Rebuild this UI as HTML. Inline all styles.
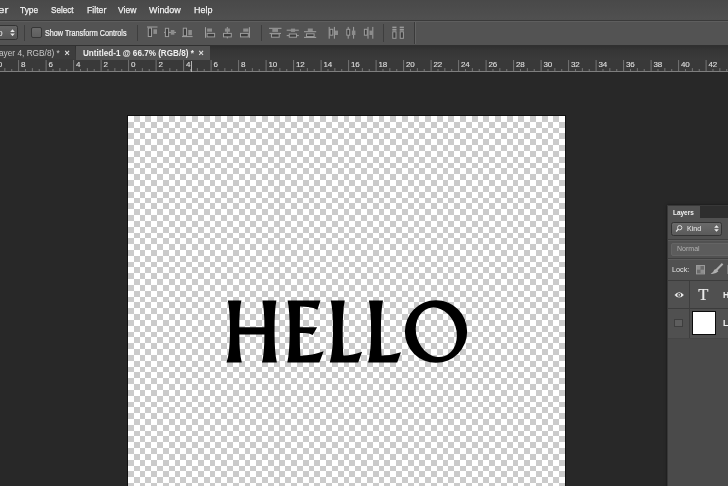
<!DOCTYPE html>
<html><head><meta charset="utf-8">
<style>
*{box-sizing:border-box;margin:0;padding:0}
html,body{width:728px;height:486px;overflow:hidden;background:#282828;font-family:"Liberation Sans",sans-serif;}
#app{position:absolute;left:-20px;top:-20px;width:768px;height:526px;overflow:hidden;background:#282828;filter:blur(0.4px)}
#in{position:absolute;left:20px;top:20px;width:728px;height:486px}
.abs{position:absolute}
#menubar{left:-20px;top:-20px;width:768px;height:40px;background:linear-gradient(#494949 50%,#505050)}
#menuline{left:-20px;top:20px;width:768px;height:1px;background:#3a3a3a}
#optbar{left:-20px;top:21px;width:768px;height:24px;background:#535353;border-top:1px solid #5e5e5e}
#optline{left:-20px;top:45px;width:768px;height:1px;background:#303030}
#tabbar{left:-20px;top:46px;width:768px;height:14px;background:linear-gradient(#2f2f2f,#363636 30%,#3b3b3b)}
#tab1{left:-20px;top:46px;width:95px;height:13px;background:#3d3d3d}
#tab2{left:76px;top:46px;width:133.5px;height:14px;background:#535353}
#rulerbg{left:-20px;top:59.5px;width:768px;height:12px;background:#393939}
.ruler{position:absolute;left:0;top:58px}
.mi{position:absolute;top:4px;font-size:9.8px;color:#f2f2f2;-webkit-text-stroke:0.25px #f2f2f2;white-space:nowrap;line-height:12px}
.t{position:absolute;white-space:nowrap;color:#e0e0e0}
</style></head><body><div id="app"><div id="in">

<!-- top chrome -->
<div id="menubar" class="abs"></div>
<div id="menuline" class="abs"></div>
<div id="optbar" class="abs"></div>
<div id="optline" class="abs"></div>
<div id="tabbar" class="abs"></div>
<div id="tab1" class="abs"></div>
<div id="tab2" class="abs"></div>
<div id="rulerbg" class="abs"></div>

<span class="mi" id="m0" style="transform-origin:0 0;transform:scaleX(1.1814);left:-2.5px;">er</span>
<span class="mi" id="m1" style="transform-origin:0 0;transform:scaleX(0.8565);left:20.0px;">Type</span>
<span class="mi" id="m2" style="transform-origin:0 0;transform:scaleX(0.8298);left:51.2px;">Select</span>
<span class="mi" id="m3" style="transform-origin:0 0;transform:scaleX(0.8861);left:87.0px;">Filter</span>
<span class="mi" id="m4" style="transform-origin:0 0;transform:scaleX(0.8688);left:118.0px;">View</span>
<span class="mi" id="m5" style="transform-origin:0 0;transform:scaleX(0.9094);left:149.3px;">Window</span>
<span class="mi" id="m6" style="transform-origin:0 0;transform:scaleX(0.9178);left:194.0px;">Help</span>

<!-- options bar -->
<div class="abs" id="dd" style="left:-6px;top:25px;width:24px;height:15px;border:1px solid #333;border-radius:2.5px;background:linear-gradient(#656565,#565656)"></div>
<span class="t" id="ddp" style="left:-2.6px;top:27.2px;font-size:9.4px;line-height:11px;color:#e4e4e4">o</span>
<svg class="abs" style="left:9.8px;top:28.8px" width="5" height="7.4" viewBox="0 0 5 7.4"><path d="M0.2 2.9L2.5 0.2L4.8 2.9z M0.2 4.5L2.5 7.2L4.8 4.5z" fill="#e6e6e6"/></svg>
<div class="abs" style="left:24px;top:25px;width:1px;height:16px;background:#3e3e3e"></div>
<div class="abs" id="cb" style="left:31.2px;top:27.3px;width:10.7px;height:10.6px;border:1.2px solid #363636;border-radius:2px;background:linear-gradient(#6a6a6a,#5e5e5e)"></div>
<span class="t" id="stc" style="transform-origin:0 0;transform:scaleX(0.8416);left:45.4px;top:27px;font-size:8.6px;line-height:12px;color:#f4f4f4;-webkit-text-stroke:0.2px #f4f4f4">Show Transform Controls</span>
<div class="abs" style="left:137px;top:25px;width:1px;height:16px;background:#3e3e3e"></div>
<div class="abs" style="left:260.5px;top:25px;width:1px;height:16px;background:#3e3e3e"></div>
<div class="abs" style="left:383px;top:24px;width:1px;height:18px;background:#3e3e3e"></div>
<div class="abs" style="left:413.5px;top:22px;width:1px;height:22px;background:#3a3a3a"></div>
<div class="abs" style="left:414.5px;top:22px;width:1px;height:22px;background:#626262"></div>

<svg class="abs" id="icons" style="left:0;top:21px" width="728" height="24" viewBox="0 21 728 24" fill="none" stroke="#a8a8a8" stroke-width="1">
<path d="M147 27L157.5 27" stroke="#a0a0a0"/>
<rect x="148.3" y="28" width="3.2" height="8.5" fill="#3c3c3c" stroke="#9c9c9c" stroke-width="1"/>
<rect x="153.4" y="29.3" width="3.6" height="4.6" fill="#8c8c8c" stroke="none"/>
<path d="M164 32.4L176 32.4" stroke="#a0a0a0"/>
<rect x="165.4" y="28.3" width="3.2" height="8.3" fill="#3c3c3c" stroke="#9c9c9c" stroke-width="1"/>
<rect x="170.8" y="30" width="3.6" height="4.7" fill="#8c8c8c" stroke="none"/>
<path d="M182 36.6L192.6 36.6" stroke="#a0a0a0"/>
<rect x="183.3" y="28.2" width="3.2" height="7.6" fill="#3c3c3c" stroke="#9c9c9c" stroke-width="1"/>
<rect x="188.3" y="30" width="3.6" height="5.2" fill="#8c8c8c" stroke="none"/>
<path d="M205.5 27.2L205.5 37.8" stroke="#a0a0a0"/>
<rect x="207.1" y="28.5" width="4.9" height="3.2" fill="#8c8c8c" stroke="none"/>
<rect x="207.1" y="33.4" width="7.5" height="3.5" fill="#3c3c3c" stroke="#9c9c9c"/>
<path d="M227.3 27L227.3 38.4" stroke="#a0a0a0"/>
<rect x="224.9" y="28.5" width="5" height="3.2" fill="#8c8c8c" stroke="none"/>
<rect x="223.5" y="33.4" width="7.8" height="3.5" fill="#3c3c3c" stroke="#9c9c9c"/>
<path d="M249.4 27.2L249.4 37.8" stroke="#a0a0a0"/>
<rect x="243.2" y="28.5" width="5.2" height="3.2" fill="#8c8c8c" stroke="none"/>
<rect x="240.5" y="33.4" width="7.8" height="3.5" fill="#3c3c3c" stroke="#9c9c9c"/>
<path d="M269 28.3L281.5 28.3" stroke="#a0a0a0"/>
<rect x="272.3" y="28.8" width="5.7" height="3.1" fill="#8c8c8c" stroke="none"/>
<path d="M269.5 33.4L281 33.4" stroke="#a0a0a0"/>
<rect x="271.5" y="33.9" width="7.7" height="3.3" fill="#3c3c3c" stroke="#9c9c9c"/>
<path d="M286.7 30.2L298.8 30.2" stroke="#a0a0a0"/>
<rect x="290.9" y="28.6" width="4.2" height="3.3" fill="#8c8c8c" stroke="none"/>
<rect x="289.3" y="34" width="7.2" height="3.2" fill="#3c3c3c" stroke="#9c9c9c"/>
<path d="M286.7 35.6L289 35.6" stroke="#a0a0a0"/>
<path d="M296.8 35.6L298.8 35.6" stroke="#a0a0a0"/>
<rect x="307.8" y="28.5" width="5" height="2.7" fill="#8c8c8c" stroke="none"/>
<path d="M304 31.7L316.2 31.7" stroke="#a0a0a0"/>
<rect x="306.5" y="33.8" width="7.6" height="2.8" fill="#3c3c3c" stroke="#9c9c9c"/>
<path d="M304 37.4L316.2 37.4" stroke="#a0a0a0"/>
<path d="M329.2 26.9L329.2 38.7" stroke="#a0a0a0"/>
<rect x="330" y="29.3" width="2.8" height="5.9" fill="#3c3c3c" stroke="#9c9c9c"/>
<path d="M334.4 26.9L334.4 38.7" stroke="#a0a0a0"/>
<rect x="334.9" y="30.6" width="3.1" height="4.4" fill="#8c8c8c" stroke="none"/>
<path d="M348.2 26.9L348.2 38.7" stroke="#a0a0a0"/>
<rect x="346.8" y="29.3" width="2.9" height="5.9" fill="#3c3c3c" stroke="#9c9c9c"/>
<path d="M353.6 26.9L353.6 38.7" stroke="#a0a0a0"/>
<rect x="351.9" y="30.6" width="3.5" height="4.4" fill="#8c8c8c" stroke="none"/>
<rect x="364.4" y="29.3" width="2.8" height="5.9" fill="#3c3c3c" stroke="#9c9c9c"/>
<path d="M368 26.9L368 38.7" stroke="#a0a0a0"/>
<rect x="369.5" y="30.6" width="2.7" height="4.4" fill="#8c8c8c" stroke="none"/>
<path d="M372.8 26.9L372.8 38.7" stroke="#a0a0a0"/>
<rect x="392.3" y="26.6" width="4.2" height="1.6" fill="#9a9a9a" stroke="none"/>
<rect x="392.3" y="29.0" width="4.2" height="1.6" fill="#9a9a9a" stroke="none"/>
<rect x="392.8" y="31.8" width="3.2" height="6.5" fill="#3c3c3c" stroke="#9c9c9c"/>
<rect x="399.7" y="26.6" width="4.2" height="1.6" fill="#9a9a9a" stroke="none"/>
<rect x="399.7" y="29.0" width="4.2" height="1.6" fill="#9a9a9a" stroke="none"/>
<rect x="400.2" y="31.8" width="3.2" height="6.5" fill="#3c3c3c" stroke="#9c9c9c"/>
</svg>

<!-- tabs -->
<span class="t" id="t1" style="transform-origin:0 0;transform:scaleX(0.9420);left:-1.5px;top:47px;font-size:8.8px;line-height:12px;color:#c8c8c8">ayer 4, RGB/8) *</span>
<span class="t" id="t1x" style="left:64.5px;top:46.5px;font-size:9px;line-height:12px;color:#e0e0e0;font-weight:bold">×</span>
<span class="t" id="t2" style="transform-origin:0 0;transform:scaleX(0.9231);left:82.6px;top:47px;font-size:8.8px;line-height:12px;color:#f0f0f0;font-weight:bold">Untitled-1 @ 66.7% (RGB/8) *</span>
<span class="t" id="t2x" style="left:198.5px;top:46.5px;font-size:9px;line-height:12px;color:#e0e0e0;font-weight:bold">×</span>

<svg class="ruler" width="728" height="14" viewBox="0 58 728 14">
<g fill="#757575"><rect x="-36.90" y="60" width="1" height="11.5" /><rect x="-30.03" y="69.00" width="1" height="2.5" /><rect x="-23.15" y="68.10" width="1" height="3.4" /><rect x="-16.28" y="69.00" width="1" height="2.5" /><rect x="-9.40" y="60" width="1" height="11.5" /><rect x="-2.53" y="69.00" width="1" height="2.5" /><rect x="4.35" y="68.10" width="1" height="3.4" /><rect x="11.22" y="69.00" width="1" height="2.5" /><rect x="18.10" y="60" width="1" height="11.5" /><rect x="24.97" y="69.00" width="1" height="2.5" /><rect x="31.85" y="68.10" width="1" height="3.4" /><rect x="38.72" y="69.00" width="1" height="2.5" /><rect x="45.60" y="60" width="1" height="11.5" /><rect x="52.47" y="69.00" width="1" height="2.5" /><rect x="59.35" y="68.10" width="1" height="3.4" /><rect x="66.22" y="69.00" width="1" height="2.5" /><rect x="73.10" y="60" width="1" height="11.5" /><rect x="79.97" y="69.00" width="1" height="2.5" /><rect x="86.85" y="68.10" width="1" height="3.4" /><rect x="93.72" y="69.00" width="1" height="2.5" /><rect x="100.60" y="60" width="1" height="11.5" /><rect x="107.47" y="69.00" width="1" height="2.5" /><rect x="114.35" y="68.10" width="1" height="3.4" /><rect x="121.22" y="69.00" width="1" height="2.5" /><rect x="128.10" y="60" width="1" height="11.5" /><rect x="134.97" y="69.00" width="1" height="2.5" /><rect x="141.85" y="68.10" width="1" height="3.4" /><rect x="148.72" y="69.00" width="1" height="2.5" /><rect x="155.60" y="60" width="1" height="11.5" /><rect x="162.47" y="69.00" width="1" height="2.5" /><rect x="169.35" y="68.10" width="1" height="3.4" /><rect x="176.22" y="69.00" width="1" height="2.5" /><rect x="183.10" y="60" width="1" height="11.5" /><rect x="189.97" y="69.00" width="1" height="2.5" /><rect x="196.85" y="68.10" width="1" height="3.4" /><rect x="203.72" y="69.00" width="1" height="2.5" /><rect x="210.60" y="60" width="1" height="11.5" /><rect x="217.47" y="69.00" width="1" height="2.5" /><rect x="224.35" y="68.10" width="1" height="3.4" /><rect x="231.22" y="69.00" width="1" height="2.5" /><rect x="238.10" y="60" width="1" height="11.5" /><rect x="244.97" y="69.00" width="1" height="2.5" /><rect x="251.85" y="68.10" width="1" height="3.4" /><rect x="258.73" y="69.00" width="1" height="2.5" /><rect x="265.60" y="60" width="1" height="11.5" /><rect x="272.48" y="69.00" width="1" height="2.5" /><rect x="279.35" y="68.10" width="1" height="3.4" /><rect x="286.23" y="69.00" width="1" height="2.5" /><rect x="293.10" y="60" width="1" height="11.5" /><rect x="299.98" y="69.00" width="1" height="2.5" /><rect x="306.85" y="68.10" width="1" height="3.4" /><rect x="313.73" y="69.00" width="1" height="2.5" /><rect x="320.60" y="60" width="1" height="11.5" /><rect x="327.48" y="69.00" width="1" height="2.5" /><rect x="334.35" y="68.10" width="1" height="3.4" /><rect x="341.23" y="69.00" width="1" height="2.5" /><rect x="348.10" y="60" width="1" height="11.5" /><rect x="354.98" y="69.00" width="1" height="2.5" /><rect x="361.85" y="68.10" width="1" height="3.4" /><rect x="368.73" y="69.00" width="1" height="2.5" /><rect x="375.60" y="60" width="1" height="11.5" /><rect x="382.48" y="69.00" width="1" height="2.5" /><rect x="389.35" y="68.10" width="1" height="3.4" /><rect x="396.23" y="69.00" width="1" height="2.5" /><rect x="403.10" y="60" width="1" height="11.5" /><rect x="409.98" y="69.00" width="1" height="2.5" /><rect x="416.85" y="68.10" width="1" height="3.4" /><rect x="423.73" y="69.00" width="1" height="2.5" /><rect x="430.60" y="60" width="1" height="11.5" /><rect x="437.48" y="69.00" width="1" height="2.5" /><rect x="444.35" y="68.10" width="1" height="3.4" /><rect x="451.23" y="69.00" width="1" height="2.5" /><rect x="458.10" y="60" width="1" height="11.5" /><rect x="464.98" y="69.00" width="1" height="2.5" /><rect x="471.85" y="68.10" width="1" height="3.4" /><rect x="478.73" y="69.00" width="1" height="2.5" /><rect x="485.60" y="60" width="1" height="11.5" /><rect x="492.48" y="69.00" width="1" height="2.5" /><rect x="499.35" y="68.10" width="1" height="3.4" /><rect x="506.23" y="69.00" width="1" height="2.5" /><rect x="513.10" y="60" width="1" height="11.5" /><rect x="519.98" y="69.00" width="1" height="2.5" /><rect x="526.85" y="68.10" width="1" height="3.4" /><rect x="533.73" y="69.00" width="1" height="2.5" /><rect x="540.60" y="60" width="1" height="11.5" /><rect x="547.48" y="69.00" width="1" height="2.5" /><rect x="554.35" y="68.10" width="1" height="3.4" /><rect x="561.23" y="69.00" width="1" height="2.5" /><rect x="568.10" y="60" width="1" height="11.5" /><rect x="574.98" y="69.00" width="1" height="2.5" /><rect x="581.85" y="68.10" width="1" height="3.4" /><rect x="588.73" y="69.00" width="1" height="2.5" /><rect x="595.60" y="60" width="1" height="11.5" /><rect x="602.48" y="69.00" width="1" height="2.5" /><rect x="609.35" y="68.10" width="1" height="3.4" /><rect x="616.23" y="69.00" width="1" height="2.5" /><rect x="623.10" y="60" width="1" height="11.5" /><rect x="629.98" y="69.00" width="1" height="2.5" /><rect x="636.85" y="68.10" width="1" height="3.4" /><rect x="643.73" y="69.00" width="1" height="2.5" /><rect x="650.60" y="60" width="1" height="11.5" /><rect x="657.48" y="69.00" width="1" height="2.5" /><rect x="664.35" y="68.10" width="1" height="3.4" /><rect x="671.23" y="69.00" width="1" height="2.5" /><rect x="678.10" y="60" width="1" height="11.5" /><rect x="684.98" y="69.00" width="1" height="2.5" /><rect x="691.85" y="68.10" width="1" height="3.4" /><rect x="698.73" y="69.00" width="1" height="2.5" /><rect x="705.60" y="60" width="1" height="11.5" /><rect x="712.48" y="69.00" width="1" height="2.5" /><rect x="719.35" y="68.10" width="1" height="3.4" /><rect x="726.23" y="69.00" width="1" height="2.5" /></g>
<g fill="#dcdcdc" font-family="Liberation Sans, sans-serif" font-size="8.0" stroke="#dcdcdc" stroke-width="0.15"><text x="-34.10" y="66.6">12</text><text x="-6.60" y="66.6">10</text><text x="20.90" y="66.6">8</text><text x="48.40" y="66.6">6</text><text x="75.90" y="66.6">4</text><text x="103.40" y="66.6">2</text><text x="130.90" y="66.6">0</text><text x="158.40" y="66.6">2</text><text x="185.90" y="66.6">4</text><text x="213.40" y="66.6">6</text><text x="240.90" y="66.6">8</text><text x="268.40" y="66.6">10</text><text x="295.90" y="66.6">12</text><text x="323.40" y="66.6">14</text><text x="350.90" y="66.6">16</text><text x="378.40" y="66.6">18</text><text x="405.90" y="66.6">20</text><text x="433.40" y="66.6">22</text><text x="460.90" y="66.6">24</text><text x="488.40" y="66.6">26</text><text x="515.90" y="66.6">28</text><text x="543.40" y="66.6">30</text><text x="570.90" y="66.6">32</text><text x="598.40" y="66.6">34</text><text x="625.90" y="66.6">36</text><text x="653.40" y="66.6">38</text><text x="680.90" y="66.6">40</text><text x="708.40" y="66.6">42</text></g>
</svg>
<div class="abs" style="left:-20px;top:71px;width:768px;height:1px;background:#7e7e7e"></div>
<div class="abs" style="left:190.8px;top:61px;width:1px;height:10.5px;background:#b4b4b4"></div>

<!-- canvas -->
<div class="abs" style="left:127.3px;top:115.3px;width:439px;height:380px;background:#111"></div>
<svg class="abs" style="left:128.3px;top:116.3px" width="437.00" height="375.70" viewBox="0 0 437.00 375.70" shape-rendering="crispEdges">
<rect width="437.00" height="375.70" fill="#fff"/>
<path fill="#cbcbcb" d="M5.83 0.00h5.83v5.83h-5.83zM17.48 0.00h5.83v5.83h-5.83zM29.13 0.00h5.83v5.83h-5.83zM40.79 0.00h5.83v5.83h-5.83zM52.44 0.00h5.83v5.83h-5.83zM64.09 0.00h5.83v5.83h-5.83zM75.75 0.00h5.83v5.83h-5.83zM87.40 0.00h5.83v5.83h-5.83zM99.05 0.00h5.83v5.83h-5.83zM110.71 0.00h5.83v5.83h-5.83zM122.36 0.00h5.83v5.83h-5.83zM134.01 0.00h5.83v5.83h-5.83zM145.67 0.00h5.83v5.83h-5.83zM157.32 0.00h5.83v5.83h-5.83zM168.97 0.00h5.83v5.83h-5.83zM180.63 0.00h5.83v5.83h-5.83zM192.28 0.00h5.83v5.83h-5.83zM203.93 0.00h5.83v5.83h-5.83zM215.59 0.00h5.83v5.83h-5.83zM227.24 0.00h5.83v5.83h-5.83zM238.89 0.00h5.83v5.83h-5.83zM250.55 0.00h5.83v5.83h-5.83zM262.20 0.00h5.83v5.83h-5.83zM273.85 0.00h5.83v5.83h-5.83zM285.51 0.00h5.83v5.83h-5.83zM297.16 0.00h5.83v5.83h-5.83zM308.82 0.00h5.83v5.83h-5.83zM320.47 0.00h5.83v5.83h-5.83zM332.12 0.00h5.83v5.83h-5.83zM343.78 0.00h5.83v5.83h-5.83zM355.43 0.00h5.83v5.83h-5.83zM367.08 0.00h5.83v5.83h-5.83zM378.74 0.00h5.83v5.83h-5.83zM390.39 0.00h5.83v5.83h-5.83zM402.04 0.00h5.83v5.83h-5.83zM413.70 0.00h5.83v5.83h-5.83zM425.35 0.00h5.83v5.83h-5.83zM0.00 5.83h5.83v5.83h-5.83zM11.65 5.83h5.83v5.83h-5.83zM23.31 5.83h5.83v5.83h-5.83zM34.96 5.83h5.83v5.83h-5.83zM46.61 5.83h5.83v5.83h-5.83zM58.27 5.83h5.83v5.83h-5.83zM69.92 5.83h5.83v5.83h-5.83zM81.57 5.83h5.83v5.83h-5.83zM93.23 5.83h5.83v5.83h-5.83zM104.88 5.83h5.83v5.83h-5.83zM116.53 5.83h5.83v5.83h-5.83zM128.19 5.83h5.83v5.83h-5.83zM139.84 5.83h5.83v5.83h-5.83zM151.49 5.83h5.83v5.83h-5.83zM163.15 5.83h5.83v5.83h-5.83zM174.80 5.83h5.83v5.83h-5.83zM186.45 5.83h5.83v5.83h-5.83zM198.11 5.83h5.83v5.83h-5.83zM209.76 5.83h5.83v5.83h-5.83zM221.41 5.83h5.83v5.83h-5.83zM233.07 5.83h5.83v5.83h-5.83zM244.72 5.83h5.83v5.83h-5.83zM256.37 5.83h5.83v5.83h-5.83zM268.03 5.83h5.83v5.83h-5.83zM279.68 5.83h5.83v5.83h-5.83zM291.33 5.83h5.83v5.83h-5.83zM302.99 5.83h5.83v5.83h-5.83zM314.64 5.83h5.83v5.83h-5.83zM326.30 5.83h5.83v5.83h-5.83zM337.95 5.83h5.83v5.83h-5.83zM349.60 5.83h5.83v5.83h-5.83zM361.26 5.83h5.83v5.83h-5.83zM372.91 5.83h5.83v5.83h-5.83zM384.56 5.83h5.83v5.83h-5.83zM396.22 5.83h5.83v5.83h-5.83zM407.87 5.83h5.83v5.83h-5.83zM419.52 5.83h5.83v5.83h-5.83zM431.18 5.83h5.82v5.83h-5.82zM5.83 11.65h5.83v5.83h-5.83zM17.48 11.65h5.83v5.83h-5.83zM29.13 11.65h5.83v5.83h-5.83zM40.79 11.65h5.83v5.83h-5.83zM52.44 11.65h5.83v5.83h-5.83zM64.09 11.65h5.83v5.83h-5.83zM75.75 11.65h5.83v5.83h-5.83zM87.40 11.65h5.83v5.83h-5.83zM99.05 11.65h5.83v5.83h-5.83zM110.71 11.65h5.83v5.83h-5.83zM122.36 11.65h5.83v5.83h-5.83zM134.01 11.65h5.83v5.83h-5.83zM145.67 11.65h5.83v5.83h-5.83zM157.32 11.65h5.83v5.83h-5.83zM168.97 11.65h5.83v5.83h-5.83zM180.63 11.65h5.83v5.83h-5.83zM192.28 11.65h5.83v5.83h-5.83zM203.93 11.65h5.83v5.83h-5.83zM215.59 11.65h5.83v5.83h-5.83zM227.24 11.65h5.83v5.83h-5.83zM238.89 11.65h5.83v5.83h-5.83zM250.55 11.65h5.83v5.83h-5.83zM262.20 11.65h5.83v5.83h-5.83zM273.85 11.65h5.83v5.83h-5.83zM285.51 11.65h5.83v5.83h-5.83zM297.16 11.65h5.83v5.83h-5.83zM308.82 11.65h5.83v5.83h-5.83zM320.47 11.65h5.83v5.83h-5.83zM332.12 11.65h5.83v5.83h-5.83zM343.78 11.65h5.83v5.83h-5.83zM355.43 11.65h5.83v5.83h-5.83zM367.08 11.65h5.83v5.83h-5.83zM378.74 11.65h5.83v5.83h-5.83zM390.39 11.65h5.83v5.83h-5.83zM402.04 11.65h5.83v5.83h-5.83zM413.70 11.65h5.83v5.83h-5.83zM425.35 11.65h5.83v5.83h-5.83zM0.00 17.48h5.83v5.83h-5.83zM11.65 17.48h5.83v5.83h-5.83zM23.31 17.48h5.83v5.83h-5.83zM34.96 17.48h5.83v5.83h-5.83zM46.61 17.48h5.83v5.83h-5.83zM58.27 17.48h5.83v5.83h-5.83zM69.92 17.48h5.83v5.83h-5.83zM81.57 17.48h5.83v5.83h-5.83zM93.23 17.48h5.83v5.83h-5.83zM104.88 17.48h5.83v5.83h-5.83zM116.53 17.48h5.83v5.83h-5.83zM128.19 17.48h5.83v5.83h-5.83zM139.84 17.48h5.83v5.83h-5.83zM151.49 17.48h5.83v5.83h-5.83zM163.15 17.48h5.83v5.83h-5.83zM174.80 17.48h5.83v5.83h-5.83zM186.45 17.48h5.83v5.83h-5.83zM198.11 17.48h5.83v5.83h-5.83zM209.76 17.48h5.83v5.83h-5.83zM221.41 17.48h5.83v5.83h-5.83zM233.07 17.48h5.83v5.83h-5.83zM244.72 17.48h5.83v5.83h-5.83zM256.37 17.48h5.83v5.83h-5.83zM268.03 17.48h5.83v5.83h-5.83zM279.68 17.48h5.83v5.83h-5.83zM291.33 17.48h5.83v5.83h-5.83zM302.99 17.48h5.83v5.83h-5.83zM314.64 17.48h5.83v5.83h-5.83zM326.30 17.48h5.83v5.83h-5.83zM337.95 17.48h5.83v5.83h-5.83zM349.60 17.48h5.83v5.83h-5.83zM361.26 17.48h5.83v5.83h-5.83zM372.91 17.48h5.83v5.83h-5.83zM384.56 17.48h5.83v5.83h-5.83zM396.22 17.48h5.83v5.83h-5.83zM407.87 17.48h5.83v5.83h-5.83zM419.52 17.48h5.83v5.83h-5.83zM431.18 17.48h5.82v5.83h-5.82zM5.83 23.31h5.83v5.83h-5.83zM17.48 23.31h5.83v5.83h-5.83zM29.13 23.31h5.83v5.83h-5.83zM40.79 23.31h5.83v5.83h-5.83zM52.44 23.31h5.83v5.83h-5.83zM64.09 23.31h5.83v5.83h-5.83zM75.75 23.31h5.83v5.83h-5.83zM87.40 23.31h5.83v5.83h-5.83zM99.05 23.31h5.83v5.83h-5.83zM110.71 23.31h5.83v5.83h-5.83zM122.36 23.31h5.83v5.83h-5.83zM134.01 23.31h5.83v5.83h-5.83zM145.67 23.31h5.83v5.83h-5.83zM157.32 23.31h5.83v5.83h-5.83zM168.97 23.31h5.83v5.83h-5.83zM180.63 23.31h5.83v5.83h-5.83zM192.28 23.31h5.83v5.83h-5.83zM203.93 23.31h5.83v5.83h-5.83zM215.59 23.31h5.83v5.83h-5.83zM227.24 23.31h5.83v5.83h-5.83zM238.89 23.31h5.83v5.83h-5.83zM250.55 23.31h5.83v5.83h-5.83zM262.20 23.31h5.83v5.83h-5.83zM273.85 23.31h5.83v5.83h-5.83zM285.51 23.31h5.83v5.83h-5.83zM297.16 23.31h5.83v5.83h-5.83zM308.82 23.31h5.83v5.83h-5.83zM320.47 23.31h5.83v5.83h-5.83zM332.12 23.31h5.83v5.83h-5.83zM343.78 23.31h5.83v5.83h-5.83zM355.43 23.31h5.83v5.83h-5.83zM367.08 23.31h5.83v5.83h-5.83zM378.74 23.31h5.83v5.83h-5.83zM390.39 23.31h5.83v5.83h-5.83zM402.04 23.31h5.83v5.83h-5.83zM413.70 23.31h5.83v5.83h-5.83zM425.35 23.31h5.83v5.83h-5.83zM0.00 29.13h5.83v5.83h-5.83zM11.65 29.13h5.83v5.83h-5.83zM23.31 29.13h5.83v5.83h-5.83zM34.96 29.13h5.83v5.83h-5.83zM46.61 29.13h5.83v5.83h-5.83zM58.27 29.13h5.83v5.83h-5.83zM69.92 29.13h5.83v5.83h-5.83zM81.57 29.13h5.83v5.83h-5.83zM93.23 29.13h5.83v5.83h-5.83zM104.88 29.13h5.83v5.83h-5.83zM116.53 29.13h5.83v5.83h-5.83zM128.19 29.13h5.83v5.83h-5.83zM139.84 29.13h5.83v5.83h-5.83zM151.49 29.13h5.83v5.83h-5.83zM163.15 29.13h5.83v5.83h-5.83zM174.80 29.13h5.83v5.83h-5.83zM186.45 29.13h5.83v5.83h-5.83zM198.11 29.13h5.83v5.83h-5.83zM209.76 29.13h5.83v5.83h-5.83zM221.41 29.13h5.83v5.83h-5.83zM233.07 29.13h5.83v5.83h-5.83zM244.72 29.13h5.83v5.83h-5.83zM256.37 29.13h5.83v5.83h-5.83zM268.03 29.13h5.83v5.83h-5.83zM279.68 29.13h5.83v5.83h-5.83zM291.33 29.13h5.83v5.83h-5.83zM302.99 29.13h5.83v5.83h-5.83zM314.64 29.13h5.83v5.83h-5.83zM326.30 29.13h5.83v5.83h-5.83zM337.95 29.13h5.83v5.83h-5.83zM349.60 29.13h5.83v5.83h-5.83zM361.26 29.13h5.83v5.83h-5.83zM372.91 29.13h5.83v5.83h-5.83zM384.56 29.13h5.83v5.83h-5.83zM396.22 29.13h5.83v5.83h-5.83zM407.87 29.13h5.83v5.83h-5.83zM419.52 29.13h5.83v5.83h-5.83zM431.18 29.13h5.82v5.83h-5.82zM5.83 34.96h5.83v5.83h-5.83zM17.48 34.96h5.83v5.83h-5.83zM29.13 34.96h5.83v5.83h-5.83zM40.79 34.96h5.83v5.83h-5.83zM52.44 34.96h5.83v5.83h-5.83zM64.09 34.96h5.83v5.83h-5.83zM75.75 34.96h5.83v5.83h-5.83zM87.40 34.96h5.83v5.83h-5.83zM99.05 34.96h5.83v5.83h-5.83zM110.71 34.96h5.83v5.83h-5.83zM122.36 34.96h5.83v5.83h-5.83zM134.01 34.96h5.83v5.83h-5.83zM145.67 34.96h5.83v5.83h-5.83zM157.32 34.96h5.83v5.83h-5.83zM168.97 34.96h5.83v5.83h-5.83zM180.63 34.96h5.83v5.83h-5.83zM192.28 34.96h5.83v5.83h-5.83zM203.93 34.96h5.83v5.83h-5.83zM215.59 34.96h5.83v5.83h-5.83zM227.24 34.96h5.83v5.83h-5.83zM238.89 34.96h5.83v5.83h-5.83zM250.55 34.96h5.83v5.83h-5.83zM262.20 34.96h5.83v5.83h-5.83zM273.85 34.96h5.83v5.83h-5.83zM285.51 34.96h5.83v5.83h-5.83zM297.16 34.96h5.83v5.83h-5.83zM308.82 34.96h5.83v5.83h-5.83zM320.47 34.96h5.83v5.83h-5.83zM332.12 34.96h5.83v5.83h-5.83zM343.78 34.96h5.83v5.83h-5.83zM355.43 34.96h5.83v5.83h-5.83zM367.08 34.96h5.83v5.83h-5.83zM378.74 34.96h5.83v5.83h-5.83zM390.39 34.96h5.83v5.83h-5.83zM402.04 34.96h5.83v5.83h-5.83zM413.70 34.96h5.83v5.83h-5.83zM425.35 34.96h5.83v5.83h-5.83zM0.00 40.79h5.83v5.83h-5.83zM11.65 40.79h5.83v5.83h-5.83zM23.31 40.79h5.83v5.83h-5.83zM34.96 40.79h5.83v5.83h-5.83zM46.61 40.79h5.83v5.83h-5.83zM58.27 40.79h5.83v5.83h-5.83zM69.92 40.79h5.83v5.83h-5.83zM81.57 40.79h5.83v5.83h-5.83zM93.23 40.79h5.83v5.83h-5.83zM104.88 40.79h5.83v5.83h-5.83zM116.53 40.79h5.83v5.83h-5.83zM128.19 40.79h5.83v5.83h-5.83zM139.84 40.79h5.83v5.83h-5.83zM151.49 40.79h5.83v5.83h-5.83zM163.15 40.79h5.83v5.83h-5.83zM174.80 40.79h5.83v5.83h-5.83zM186.45 40.79h5.83v5.83h-5.83zM198.11 40.79h5.83v5.83h-5.83zM209.76 40.79h5.83v5.83h-5.83zM221.41 40.79h5.83v5.83h-5.83zM233.07 40.79h5.83v5.83h-5.83zM244.72 40.79h5.83v5.83h-5.83zM256.37 40.79h5.83v5.83h-5.83zM268.03 40.79h5.83v5.83h-5.83zM279.68 40.79h5.83v5.83h-5.83zM291.33 40.79h5.83v5.83h-5.83zM302.99 40.79h5.83v5.83h-5.83zM314.64 40.79h5.83v5.83h-5.83zM326.30 40.79h5.83v5.83h-5.83zM337.95 40.79h5.83v5.83h-5.83zM349.60 40.79h5.83v5.83h-5.83zM361.26 40.79h5.83v5.83h-5.83zM372.91 40.79h5.83v5.83h-5.83zM384.56 40.79h5.83v5.83h-5.83zM396.22 40.79h5.83v5.83h-5.83zM407.87 40.79h5.83v5.83h-5.83zM419.52 40.79h5.83v5.83h-5.83zM431.18 40.79h5.82v5.83h-5.82zM5.83 46.61h5.83v5.83h-5.83zM17.48 46.61h5.83v5.83h-5.83zM29.13 46.61h5.83v5.83h-5.83zM40.79 46.61h5.83v5.83h-5.83zM52.44 46.61h5.83v5.83h-5.83zM64.09 46.61h5.83v5.83h-5.83zM75.75 46.61h5.83v5.83h-5.83zM87.40 46.61h5.83v5.83h-5.83zM99.05 46.61h5.83v5.83h-5.83zM110.71 46.61h5.83v5.83h-5.83zM122.36 46.61h5.83v5.83h-5.83zM134.01 46.61h5.83v5.83h-5.83zM145.67 46.61h5.83v5.83h-5.83zM157.32 46.61h5.83v5.83h-5.83zM168.97 46.61h5.83v5.83h-5.83zM180.63 46.61h5.83v5.83h-5.83zM192.28 46.61h5.83v5.83h-5.83zM203.93 46.61h5.83v5.83h-5.83zM215.59 46.61h5.83v5.83h-5.83zM227.24 46.61h5.83v5.83h-5.83zM238.89 46.61h5.83v5.83h-5.83zM250.55 46.61h5.83v5.83h-5.83zM262.20 46.61h5.83v5.83h-5.83zM273.85 46.61h5.83v5.83h-5.83zM285.51 46.61h5.83v5.83h-5.83zM297.16 46.61h5.83v5.83h-5.83zM308.82 46.61h5.83v5.83h-5.83zM320.47 46.61h5.83v5.83h-5.83zM332.12 46.61h5.83v5.83h-5.83zM343.78 46.61h5.83v5.83h-5.83zM355.43 46.61h5.83v5.83h-5.83zM367.08 46.61h5.83v5.83h-5.83zM378.74 46.61h5.83v5.83h-5.83zM390.39 46.61h5.83v5.83h-5.83zM402.04 46.61h5.83v5.83h-5.83zM413.70 46.61h5.83v5.83h-5.83zM425.35 46.61h5.83v5.83h-5.83zM0.00 52.44h5.83v5.83h-5.83zM11.65 52.44h5.83v5.83h-5.83zM23.31 52.44h5.83v5.83h-5.83zM34.96 52.44h5.83v5.83h-5.83zM46.61 52.44h5.83v5.83h-5.83zM58.27 52.44h5.83v5.83h-5.83zM69.92 52.44h5.83v5.83h-5.83zM81.57 52.44h5.83v5.83h-5.83zM93.23 52.44h5.83v5.83h-5.83zM104.88 52.44h5.83v5.83h-5.83zM116.53 52.44h5.83v5.83h-5.83zM128.19 52.44h5.83v5.83h-5.83zM139.84 52.44h5.83v5.83h-5.83zM151.49 52.44h5.83v5.83h-5.83zM163.15 52.44h5.83v5.83h-5.83zM174.80 52.44h5.83v5.83h-5.83zM186.45 52.44h5.83v5.83h-5.83zM198.11 52.44h5.83v5.83h-5.83zM209.76 52.44h5.83v5.83h-5.83zM221.41 52.44h5.83v5.83h-5.83zM233.07 52.44h5.83v5.83h-5.83zM244.72 52.44h5.83v5.83h-5.83zM256.37 52.44h5.83v5.83h-5.83zM268.03 52.44h5.83v5.83h-5.83zM279.68 52.44h5.83v5.83h-5.83zM291.33 52.44h5.83v5.83h-5.83zM302.99 52.44h5.83v5.83h-5.83zM314.64 52.44h5.83v5.83h-5.83zM326.30 52.44h5.83v5.83h-5.83zM337.95 52.44h5.83v5.83h-5.83zM349.60 52.44h5.83v5.83h-5.83zM361.26 52.44h5.83v5.83h-5.83zM372.91 52.44h5.83v5.83h-5.83zM384.56 52.44h5.83v5.83h-5.83zM396.22 52.44h5.83v5.83h-5.83zM407.87 52.44h5.83v5.83h-5.83zM419.52 52.44h5.83v5.83h-5.83zM431.18 52.44h5.82v5.83h-5.82zM5.83 58.27h5.83v5.83h-5.83zM17.48 58.27h5.83v5.83h-5.83zM29.13 58.27h5.83v5.83h-5.83zM40.79 58.27h5.83v5.83h-5.83zM52.44 58.27h5.83v5.83h-5.83zM64.09 58.27h5.83v5.83h-5.83zM75.75 58.27h5.83v5.83h-5.83zM87.40 58.27h5.83v5.83h-5.83zM99.05 58.27h5.83v5.83h-5.83zM110.71 58.27h5.83v5.83h-5.83zM122.36 58.27h5.83v5.83h-5.83zM134.01 58.27h5.83v5.83h-5.83zM145.67 58.27h5.83v5.83h-5.83zM157.32 58.27h5.83v5.83h-5.83zM168.97 58.27h5.83v5.83h-5.83zM180.63 58.27h5.83v5.83h-5.83zM192.28 58.27h5.83v5.83h-5.83zM203.93 58.27h5.83v5.83h-5.83zM215.59 58.27h5.83v5.83h-5.83zM227.24 58.27h5.83v5.83h-5.83zM238.89 58.27h5.83v5.83h-5.83zM250.55 58.27h5.83v5.83h-5.83zM262.20 58.27h5.83v5.83h-5.83zM273.85 58.27h5.83v5.83h-5.83zM285.51 58.27h5.83v5.83h-5.83zM297.16 58.27h5.83v5.83h-5.83zM308.82 58.27h5.83v5.83h-5.83zM320.47 58.27h5.83v5.83h-5.83zM332.12 58.27h5.83v5.83h-5.83zM343.78 58.27h5.83v5.83h-5.83zM355.43 58.27h5.83v5.83h-5.83zM367.08 58.27h5.83v5.83h-5.83zM378.74 58.27h5.83v5.83h-5.83zM390.39 58.27h5.83v5.83h-5.83zM402.04 58.27h5.83v5.83h-5.83zM413.70 58.27h5.83v5.83h-5.83zM425.35 58.27h5.83v5.83h-5.83zM0.00 64.09h5.83v5.83h-5.83zM11.65 64.09h5.83v5.83h-5.83zM23.31 64.09h5.83v5.83h-5.83zM34.96 64.09h5.83v5.83h-5.83zM46.61 64.09h5.83v5.83h-5.83zM58.27 64.09h5.83v5.83h-5.83zM69.92 64.09h5.83v5.83h-5.83zM81.57 64.09h5.83v5.83h-5.83zM93.23 64.09h5.83v5.83h-5.83zM104.88 64.09h5.83v5.83h-5.83zM116.53 64.09h5.83v5.83h-5.83zM128.19 64.09h5.83v5.83h-5.83zM139.84 64.09h5.83v5.83h-5.83zM151.49 64.09h5.83v5.83h-5.83zM163.15 64.09h5.83v5.83h-5.83zM174.80 64.09h5.83v5.83h-5.83zM186.45 64.09h5.83v5.83h-5.83zM198.11 64.09h5.83v5.83h-5.83zM209.76 64.09h5.83v5.83h-5.83zM221.41 64.09h5.83v5.83h-5.83zM233.07 64.09h5.83v5.83h-5.83zM244.72 64.09h5.83v5.83h-5.83zM256.37 64.09h5.83v5.83h-5.83zM268.03 64.09h5.83v5.83h-5.83zM279.68 64.09h5.83v5.83h-5.83zM291.33 64.09h5.83v5.83h-5.83zM302.99 64.09h5.83v5.83h-5.83zM314.64 64.09h5.83v5.83h-5.83zM326.30 64.09h5.83v5.83h-5.83zM337.95 64.09h5.83v5.83h-5.83zM349.60 64.09h5.83v5.83h-5.83zM361.26 64.09h5.83v5.83h-5.83zM372.91 64.09h5.83v5.83h-5.83zM384.56 64.09h5.83v5.83h-5.83zM396.22 64.09h5.83v5.83h-5.83zM407.87 64.09h5.83v5.83h-5.83zM419.52 64.09h5.83v5.83h-5.83zM431.18 64.09h5.82v5.83h-5.82zM5.83 69.92h5.83v5.83h-5.83zM17.48 69.92h5.83v5.83h-5.83zM29.13 69.92h5.83v5.83h-5.83zM40.79 69.92h5.83v5.83h-5.83zM52.44 69.92h5.83v5.83h-5.83zM64.09 69.92h5.83v5.83h-5.83zM75.75 69.92h5.83v5.83h-5.83zM87.40 69.92h5.83v5.83h-5.83zM99.05 69.92h5.83v5.83h-5.83zM110.71 69.92h5.83v5.83h-5.83zM122.36 69.92h5.83v5.83h-5.83zM134.01 69.92h5.83v5.83h-5.83zM145.67 69.92h5.83v5.83h-5.83zM157.32 69.92h5.83v5.83h-5.83zM168.97 69.92h5.83v5.83h-5.83zM180.63 69.92h5.83v5.83h-5.83zM192.28 69.92h5.83v5.83h-5.83zM203.93 69.92h5.83v5.83h-5.83zM215.59 69.92h5.83v5.83h-5.83zM227.24 69.92h5.83v5.83h-5.83zM238.89 69.92h5.83v5.83h-5.83zM250.55 69.92h5.83v5.83h-5.83zM262.20 69.92h5.83v5.83h-5.83zM273.85 69.92h5.83v5.83h-5.83zM285.51 69.92h5.83v5.83h-5.83zM297.16 69.92h5.83v5.83h-5.83zM308.82 69.92h5.83v5.83h-5.83zM320.47 69.92h5.83v5.83h-5.83zM332.12 69.92h5.83v5.83h-5.83zM343.78 69.92h5.83v5.83h-5.83zM355.43 69.92h5.83v5.83h-5.83zM367.08 69.92h5.83v5.83h-5.83zM378.74 69.92h5.83v5.83h-5.83zM390.39 69.92h5.83v5.83h-5.83zM402.04 69.92h5.83v5.83h-5.83zM413.70 69.92h5.83v5.83h-5.83zM425.35 69.92h5.83v5.83h-5.83zM0.00 75.75h5.83v5.83h-5.83zM11.65 75.75h5.83v5.83h-5.83zM23.31 75.75h5.83v5.83h-5.83zM34.96 75.75h5.83v5.83h-5.83zM46.61 75.75h5.83v5.83h-5.83zM58.27 75.75h5.83v5.83h-5.83zM69.92 75.75h5.83v5.83h-5.83zM81.57 75.75h5.83v5.83h-5.83zM93.23 75.75h5.83v5.83h-5.83zM104.88 75.75h5.83v5.83h-5.83zM116.53 75.75h5.83v5.83h-5.83zM128.19 75.75h5.83v5.83h-5.83zM139.84 75.75h5.83v5.83h-5.83zM151.49 75.75h5.83v5.83h-5.83zM163.15 75.75h5.83v5.83h-5.83zM174.80 75.75h5.83v5.83h-5.83zM186.45 75.75h5.83v5.83h-5.83zM198.11 75.75h5.83v5.83h-5.83zM209.76 75.75h5.83v5.83h-5.83zM221.41 75.75h5.83v5.83h-5.83zM233.07 75.75h5.83v5.83h-5.83zM244.72 75.75h5.83v5.83h-5.83zM256.37 75.75h5.83v5.83h-5.83zM268.03 75.75h5.83v5.83h-5.83zM279.68 75.75h5.83v5.83h-5.83zM291.33 75.75h5.83v5.83h-5.83zM302.99 75.75h5.83v5.83h-5.83zM314.64 75.75h5.83v5.83h-5.83zM326.30 75.75h5.83v5.83h-5.83zM337.95 75.75h5.83v5.83h-5.83zM349.60 75.75h5.83v5.83h-5.83zM361.26 75.75h5.83v5.83h-5.83zM372.91 75.75h5.83v5.83h-5.83zM384.56 75.75h5.83v5.83h-5.83zM396.22 75.75h5.83v5.83h-5.83zM407.87 75.75h5.83v5.83h-5.83zM419.52 75.75h5.83v5.83h-5.83zM431.18 75.75h5.82v5.83h-5.82zM5.83 81.57h5.83v5.83h-5.83zM17.48 81.57h5.83v5.83h-5.83zM29.13 81.57h5.83v5.83h-5.83zM40.79 81.57h5.83v5.83h-5.83zM52.44 81.57h5.83v5.83h-5.83zM64.09 81.57h5.83v5.83h-5.83zM75.75 81.57h5.83v5.83h-5.83zM87.40 81.57h5.83v5.83h-5.83zM99.05 81.57h5.83v5.83h-5.83zM110.71 81.57h5.83v5.83h-5.83zM122.36 81.57h5.83v5.83h-5.83zM134.01 81.57h5.83v5.83h-5.83zM145.67 81.57h5.83v5.83h-5.83zM157.32 81.57h5.83v5.83h-5.83zM168.97 81.57h5.83v5.83h-5.83zM180.63 81.57h5.83v5.83h-5.83zM192.28 81.57h5.83v5.83h-5.83zM203.93 81.57h5.83v5.83h-5.83zM215.59 81.57h5.83v5.83h-5.83zM227.24 81.57h5.83v5.83h-5.83zM238.89 81.57h5.83v5.83h-5.83zM250.55 81.57h5.83v5.83h-5.83zM262.20 81.57h5.83v5.83h-5.83zM273.85 81.57h5.83v5.83h-5.83zM285.51 81.57h5.83v5.83h-5.83zM297.16 81.57h5.83v5.83h-5.83zM308.82 81.57h5.83v5.83h-5.83zM320.47 81.57h5.83v5.83h-5.83zM332.12 81.57h5.83v5.83h-5.83zM343.78 81.57h5.83v5.83h-5.83zM355.43 81.57h5.83v5.83h-5.83zM367.08 81.57h5.83v5.83h-5.83zM378.74 81.57h5.83v5.83h-5.83zM390.39 81.57h5.83v5.83h-5.83zM402.04 81.57h5.83v5.83h-5.83zM413.70 81.57h5.83v5.83h-5.83zM425.35 81.57h5.83v5.83h-5.83zM0.00 87.40h5.83v5.83h-5.83zM11.65 87.40h5.83v5.83h-5.83zM23.31 87.40h5.83v5.83h-5.83zM34.96 87.40h5.83v5.83h-5.83zM46.61 87.40h5.83v5.83h-5.83zM58.27 87.40h5.83v5.83h-5.83zM69.92 87.40h5.83v5.83h-5.83zM81.57 87.40h5.83v5.83h-5.83zM93.23 87.40h5.83v5.83h-5.83zM104.88 87.40h5.83v5.83h-5.83zM116.53 87.40h5.83v5.83h-5.83zM128.19 87.40h5.83v5.83h-5.83zM139.84 87.40h5.83v5.83h-5.83zM151.49 87.40h5.83v5.83h-5.83zM163.15 87.40h5.83v5.83h-5.83zM174.80 87.40h5.83v5.83h-5.83zM186.45 87.40h5.83v5.83h-5.83zM198.11 87.40h5.83v5.83h-5.83zM209.76 87.40h5.83v5.83h-5.83zM221.41 87.40h5.83v5.83h-5.83zM233.07 87.40h5.83v5.83h-5.83zM244.72 87.40h5.83v5.83h-5.83zM256.37 87.40h5.83v5.83h-5.83zM268.03 87.40h5.83v5.83h-5.83zM279.68 87.40h5.83v5.83h-5.83zM291.33 87.40h5.83v5.83h-5.83zM302.99 87.40h5.83v5.83h-5.83zM314.64 87.40h5.83v5.83h-5.83zM326.30 87.40h5.83v5.83h-5.83zM337.95 87.40h5.83v5.83h-5.83zM349.60 87.40h5.83v5.83h-5.83zM361.26 87.40h5.83v5.83h-5.83zM372.91 87.40h5.83v5.83h-5.83zM384.56 87.40h5.83v5.83h-5.83zM396.22 87.40h5.83v5.83h-5.83zM407.87 87.40h5.83v5.83h-5.83zM419.52 87.40h5.83v5.83h-5.83zM431.18 87.40h5.82v5.83h-5.82zM5.83 93.23h5.83v5.83h-5.83zM17.48 93.23h5.83v5.83h-5.83zM29.13 93.23h5.83v5.83h-5.83zM40.79 93.23h5.83v5.83h-5.83zM52.44 93.23h5.83v5.83h-5.83zM64.09 93.23h5.83v5.83h-5.83zM75.75 93.23h5.83v5.83h-5.83zM87.40 93.23h5.83v5.83h-5.83zM99.05 93.23h5.83v5.83h-5.83zM110.71 93.23h5.83v5.83h-5.83zM122.36 93.23h5.83v5.83h-5.83zM134.01 93.23h5.83v5.83h-5.83zM145.67 93.23h5.83v5.83h-5.83zM157.32 93.23h5.83v5.83h-5.83zM168.97 93.23h5.83v5.83h-5.83zM180.63 93.23h5.83v5.83h-5.83zM192.28 93.23h5.83v5.83h-5.83zM203.93 93.23h5.83v5.83h-5.83zM215.59 93.23h5.83v5.83h-5.83zM227.24 93.23h5.83v5.83h-5.83zM238.89 93.23h5.83v5.83h-5.83zM250.55 93.23h5.83v5.83h-5.83zM262.20 93.23h5.83v5.83h-5.83zM273.85 93.23h5.83v5.83h-5.83zM285.51 93.23h5.83v5.83h-5.83zM297.16 93.23h5.83v5.83h-5.83zM308.82 93.23h5.83v5.83h-5.83zM320.47 93.23h5.83v5.83h-5.83zM332.12 93.23h5.83v5.83h-5.83zM343.78 93.23h5.83v5.83h-5.83zM355.43 93.23h5.83v5.83h-5.83zM367.08 93.23h5.83v5.83h-5.83zM378.74 93.23h5.83v5.83h-5.83zM390.39 93.23h5.83v5.83h-5.83zM402.04 93.23h5.83v5.83h-5.83zM413.70 93.23h5.83v5.83h-5.83zM425.35 93.23h5.83v5.83h-5.83zM0.00 99.05h5.83v5.83h-5.83zM11.65 99.05h5.83v5.83h-5.83zM23.31 99.05h5.83v5.83h-5.83zM34.96 99.05h5.83v5.83h-5.83zM46.61 99.05h5.83v5.83h-5.83zM58.27 99.05h5.83v5.83h-5.83zM69.92 99.05h5.83v5.83h-5.83zM81.57 99.05h5.83v5.83h-5.83zM93.23 99.05h5.83v5.83h-5.83zM104.88 99.05h5.83v5.83h-5.83zM116.53 99.05h5.83v5.83h-5.83zM128.19 99.05h5.83v5.83h-5.83zM139.84 99.05h5.83v5.83h-5.83zM151.49 99.05h5.83v5.83h-5.83zM163.15 99.05h5.83v5.83h-5.83zM174.80 99.05h5.83v5.83h-5.83zM186.45 99.05h5.83v5.83h-5.83zM198.11 99.05h5.83v5.83h-5.83zM209.76 99.05h5.83v5.83h-5.83zM221.41 99.05h5.83v5.83h-5.83zM233.07 99.05h5.83v5.83h-5.83zM244.72 99.05h5.83v5.83h-5.83zM256.37 99.05h5.83v5.83h-5.83zM268.03 99.05h5.83v5.83h-5.83zM279.68 99.05h5.83v5.83h-5.83zM291.33 99.05h5.83v5.83h-5.83zM302.99 99.05h5.83v5.83h-5.83zM314.64 99.05h5.83v5.83h-5.83zM326.30 99.05h5.83v5.83h-5.83zM337.95 99.05h5.83v5.83h-5.83zM349.60 99.05h5.83v5.83h-5.83zM361.26 99.05h5.83v5.83h-5.83zM372.91 99.05h5.83v5.83h-5.83zM384.56 99.05h5.83v5.83h-5.83zM396.22 99.05h5.83v5.83h-5.83zM407.87 99.05h5.83v5.83h-5.83zM419.52 99.05h5.83v5.83h-5.83zM431.18 99.05h5.82v5.83h-5.82zM5.83 104.88h5.83v5.83h-5.83zM17.48 104.88h5.83v5.83h-5.83zM29.13 104.88h5.83v5.83h-5.83zM40.79 104.88h5.83v5.83h-5.83zM52.44 104.88h5.83v5.83h-5.83zM64.09 104.88h5.83v5.83h-5.83zM75.75 104.88h5.83v5.83h-5.83zM87.40 104.88h5.83v5.83h-5.83zM99.05 104.88h5.83v5.83h-5.83zM110.71 104.88h5.83v5.83h-5.83zM122.36 104.88h5.83v5.83h-5.83zM134.01 104.88h5.83v5.83h-5.83zM145.67 104.88h5.83v5.83h-5.83zM157.32 104.88h5.83v5.83h-5.83zM168.97 104.88h5.83v5.83h-5.83zM180.63 104.88h5.83v5.83h-5.83zM192.28 104.88h5.83v5.83h-5.83zM203.93 104.88h5.83v5.83h-5.83zM215.59 104.88h5.83v5.83h-5.83zM227.24 104.88h5.83v5.83h-5.83zM238.89 104.88h5.83v5.83h-5.83zM250.55 104.88h5.83v5.83h-5.83zM262.20 104.88h5.83v5.83h-5.83zM273.85 104.88h5.83v5.83h-5.83zM285.51 104.88h5.83v5.83h-5.83zM297.16 104.88h5.83v5.83h-5.83zM308.82 104.88h5.83v5.83h-5.83zM320.47 104.88h5.83v5.83h-5.83zM332.12 104.88h5.83v5.83h-5.83zM343.78 104.88h5.83v5.83h-5.83zM355.43 104.88h5.83v5.83h-5.83zM367.08 104.88h5.83v5.83h-5.83zM378.74 104.88h5.83v5.83h-5.83zM390.39 104.88h5.83v5.83h-5.83zM402.04 104.88h5.83v5.83h-5.83zM413.70 104.88h5.83v5.83h-5.83zM425.35 104.88h5.83v5.83h-5.83zM0.00 110.71h5.83v5.83h-5.83zM11.65 110.71h5.83v5.83h-5.83zM23.31 110.71h5.83v5.83h-5.83zM34.96 110.71h5.83v5.83h-5.83zM46.61 110.71h5.83v5.83h-5.83zM58.27 110.71h5.83v5.83h-5.83zM69.92 110.71h5.83v5.83h-5.83zM81.57 110.71h5.83v5.83h-5.83zM93.23 110.71h5.83v5.83h-5.83zM104.88 110.71h5.83v5.83h-5.83zM116.53 110.71h5.83v5.83h-5.83zM128.19 110.71h5.83v5.83h-5.83zM139.84 110.71h5.83v5.83h-5.83zM151.49 110.71h5.83v5.83h-5.83zM163.15 110.71h5.83v5.83h-5.83zM174.80 110.71h5.83v5.83h-5.83zM186.45 110.71h5.83v5.83h-5.83zM198.11 110.71h5.83v5.83h-5.83zM209.76 110.71h5.83v5.83h-5.83zM221.41 110.71h5.83v5.83h-5.83zM233.07 110.71h5.83v5.83h-5.83zM244.72 110.71h5.83v5.83h-5.83zM256.37 110.71h5.83v5.83h-5.83zM268.03 110.71h5.83v5.83h-5.83zM279.68 110.71h5.83v5.83h-5.83zM291.33 110.71h5.83v5.83h-5.83zM302.99 110.71h5.83v5.83h-5.83zM314.64 110.71h5.83v5.83h-5.83zM326.30 110.71h5.83v5.83h-5.83zM337.95 110.71h5.83v5.83h-5.83zM349.60 110.71h5.83v5.83h-5.83zM361.26 110.71h5.83v5.83h-5.83zM372.91 110.71h5.83v5.83h-5.83zM384.56 110.71h5.83v5.83h-5.83zM396.22 110.71h5.83v5.83h-5.83zM407.87 110.71h5.83v5.83h-5.83zM419.52 110.71h5.83v5.83h-5.83zM431.18 110.71h5.82v5.83h-5.82zM5.83 116.53h5.83v5.83h-5.83zM17.48 116.53h5.83v5.83h-5.83zM29.13 116.53h5.83v5.83h-5.83zM40.79 116.53h5.83v5.83h-5.83zM52.44 116.53h5.83v5.83h-5.83zM64.09 116.53h5.83v5.83h-5.83zM75.75 116.53h5.83v5.83h-5.83zM87.40 116.53h5.83v5.83h-5.83zM99.05 116.53h5.83v5.83h-5.83zM110.71 116.53h5.83v5.83h-5.83zM122.36 116.53h5.83v5.83h-5.83zM134.01 116.53h5.83v5.83h-5.83zM145.67 116.53h5.83v5.83h-5.83zM157.32 116.53h5.83v5.83h-5.83zM168.97 116.53h5.83v5.83h-5.83zM180.63 116.53h5.83v5.83h-5.83zM192.28 116.53h5.83v5.83h-5.83zM203.93 116.53h5.83v5.83h-5.83zM215.59 116.53h5.83v5.83h-5.83zM227.24 116.53h5.83v5.83h-5.83zM238.89 116.53h5.83v5.83h-5.83zM250.55 116.53h5.83v5.83h-5.83zM262.20 116.53h5.83v5.83h-5.83zM273.85 116.53h5.83v5.83h-5.83zM285.51 116.53h5.83v5.83h-5.83zM297.16 116.53h5.83v5.83h-5.83zM308.82 116.53h5.83v5.83h-5.83zM320.47 116.53h5.83v5.83h-5.83zM332.12 116.53h5.83v5.83h-5.83zM343.78 116.53h5.83v5.83h-5.83zM355.43 116.53h5.83v5.83h-5.83zM367.08 116.53h5.83v5.83h-5.83zM378.74 116.53h5.83v5.83h-5.83zM390.39 116.53h5.83v5.83h-5.83zM402.04 116.53h5.83v5.83h-5.83zM413.70 116.53h5.83v5.83h-5.83zM425.35 116.53h5.83v5.83h-5.83zM0.00 122.36h5.83v5.83h-5.83zM11.65 122.36h5.83v5.83h-5.83zM23.31 122.36h5.83v5.83h-5.83zM34.96 122.36h5.83v5.83h-5.83zM46.61 122.36h5.83v5.83h-5.83zM58.27 122.36h5.83v5.83h-5.83zM69.92 122.36h5.83v5.83h-5.83zM81.57 122.36h5.83v5.83h-5.83zM93.23 122.36h5.83v5.83h-5.83zM104.88 122.36h5.83v5.83h-5.83zM116.53 122.36h5.83v5.83h-5.83zM128.19 122.36h5.83v5.83h-5.83zM139.84 122.36h5.83v5.83h-5.83zM151.49 122.36h5.83v5.83h-5.83zM163.15 122.36h5.83v5.83h-5.83zM174.80 122.36h5.83v5.83h-5.83zM186.45 122.36h5.83v5.83h-5.83zM198.11 122.36h5.83v5.83h-5.83zM209.76 122.36h5.83v5.83h-5.83zM221.41 122.36h5.83v5.83h-5.83zM233.07 122.36h5.83v5.83h-5.83zM244.72 122.36h5.83v5.83h-5.83zM256.37 122.36h5.83v5.83h-5.83zM268.03 122.36h5.83v5.83h-5.83zM279.68 122.36h5.83v5.83h-5.83zM291.33 122.36h5.83v5.83h-5.83zM302.99 122.36h5.83v5.83h-5.83zM314.64 122.36h5.83v5.83h-5.83zM326.30 122.36h5.83v5.83h-5.83zM337.95 122.36h5.83v5.83h-5.83zM349.60 122.36h5.83v5.83h-5.83zM361.26 122.36h5.83v5.83h-5.83zM372.91 122.36h5.83v5.83h-5.83zM384.56 122.36h5.83v5.83h-5.83zM396.22 122.36h5.83v5.83h-5.83zM407.87 122.36h5.83v5.83h-5.83zM419.52 122.36h5.83v5.83h-5.83zM431.18 122.36h5.82v5.83h-5.82zM5.83 128.19h5.83v5.83h-5.83zM17.48 128.19h5.83v5.83h-5.83zM29.13 128.19h5.83v5.83h-5.83zM40.79 128.19h5.83v5.83h-5.83zM52.44 128.19h5.83v5.83h-5.83zM64.09 128.19h5.83v5.83h-5.83zM75.75 128.19h5.83v5.83h-5.83zM87.40 128.19h5.83v5.83h-5.83zM99.05 128.19h5.83v5.83h-5.83zM110.71 128.19h5.83v5.83h-5.83zM122.36 128.19h5.83v5.83h-5.83zM134.01 128.19h5.83v5.83h-5.83zM145.67 128.19h5.83v5.83h-5.83zM157.32 128.19h5.83v5.83h-5.83zM168.97 128.19h5.83v5.83h-5.83zM180.63 128.19h5.83v5.83h-5.83zM192.28 128.19h5.83v5.83h-5.83zM203.93 128.19h5.83v5.83h-5.83zM215.59 128.19h5.83v5.83h-5.83zM227.24 128.19h5.83v5.83h-5.83zM238.89 128.19h5.83v5.83h-5.83zM250.55 128.19h5.83v5.83h-5.83zM262.20 128.19h5.83v5.83h-5.83zM273.85 128.19h5.83v5.83h-5.83zM285.51 128.19h5.83v5.83h-5.83zM297.16 128.19h5.83v5.83h-5.83zM308.82 128.19h5.83v5.83h-5.83zM320.47 128.19h5.83v5.83h-5.83zM332.12 128.19h5.83v5.83h-5.83zM343.78 128.19h5.83v5.83h-5.83zM355.43 128.19h5.83v5.83h-5.83zM367.08 128.19h5.83v5.83h-5.83zM378.74 128.19h5.83v5.83h-5.83zM390.39 128.19h5.83v5.83h-5.83zM402.04 128.19h5.83v5.83h-5.83zM413.70 128.19h5.83v5.83h-5.83zM425.35 128.19h5.83v5.83h-5.83zM0.00 134.01h5.83v5.83h-5.83zM11.65 134.01h5.83v5.83h-5.83zM23.31 134.01h5.83v5.83h-5.83zM34.96 134.01h5.83v5.83h-5.83zM46.61 134.01h5.83v5.83h-5.83zM58.27 134.01h5.83v5.83h-5.83zM69.92 134.01h5.83v5.83h-5.83zM81.57 134.01h5.83v5.83h-5.83zM93.23 134.01h5.83v5.83h-5.83zM104.88 134.01h5.83v5.83h-5.83zM116.53 134.01h5.83v5.83h-5.83zM128.19 134.01h5.83v5.83h-5.83zM139.84 134.01h5.83v5.83h-5.83zM151.49 134.01h5.83v5.83h-5.83zM163.15 134.01h5.83v5.83h-5.83zM174.80 134.01h5.83v5.83h-5.83zM186.45 134.01h5.83v5.83h-5.83zM198.11 134.01h5.83v5.83h-5.83zM209.76 134.01h5.83v5.83h-5.83zM221.41 134.01h5.83v5.83h-5.83zM233.07 134.01h5.83v5.83h-5.83zM244.72 134.01h5.83v5.83h-5.83zM256.37 134.01h5.83v5.83h-5.83zM268.03 134.01h5.83v5.83h-5.83zM279.68 134.01h5.83v5.83h-5.83zM291.33 134.01h5.83v5.83h-5.83zM302.99 134.01h5.83v5.83h-5.83zM314.64 134.01h5.83v5.83h-5.83zM326.30 134.01h5.83v5.83h-5.83zM337.95 134.01h5.83v5.83h-5.83zM349.60 134.01h5.83v5.83h-5.83zM361.26 134.01h5.83v5.83h-5.83zM372.91 134.01h5.83v5.83h-5.83zM384.56 134.01h5.83v5.83h-5.83zM396.22 134.01h5.83v5.83h-5.83zM407.87 134.01h5.83v5.83h-5.83zM419.52 134.01h5.83v5.83h-5.83zM431.18 134.01h5.82v5.83h-5.82zM5.83 139.84h5.83v5.83h-5.83zM17.48 139.84h5.83v5.83h-5.83zM29.13 139.84h5.83v5.83h-5.83zM40.79 139.84h5.83v5.83h-5.83zM52.44 139.84h5.83v5.83h-5.83zM64.09 139.84h5.83v5.83h-5.83zM75.75 139.84h5.83v5.83h-5.83zM87.40 139.84h5.83v5.83h-5.83zM99.05 139.84h5.83v5.83h-5.83zM110.71 139.84h5.83v5.83h-5.83zM122.36 139.84h5.83v5.83h-5.83zM134.01 139.84h5.83v5.83h-5.83zM145.67 139.84h5.83v5.83h-5.83zM157.32 139.84h5.83v5.83h-5.83zM168.97 139.84h5.83v5.83h-5.83zM180.63 139.84h5.83v5.83h-5.83zM192.28 139.84h5.83v5.83h-5.83zM203.93 139.84h5.83v5.83h-5.83zM215.59 139.84h5.83v5.83h-5.83zM227.24 139.84h5.83v5.83h-5.83zM238.89 139.84h5.83v5.83h-5.83zM250.55 139.84h5.83v5.83h-5.83zM262.20 139.84h5.83v5.83h-5.83zM273.85 139.84h5.83v5.83h-5.83zM285.51 139.84h5.83v5.83h-5.83zM297.16 139.84h5.83v5.83h-5.83zM308.82 139.84h5.83v5.83h-5.83zM320.47 139.84h5.83v5.83h-5.83zM332.12 139.84h5.83v5.83h-5.83zM343.78 139.84h5.83v5.83h-5.83zM355.43 139.84h5.83v5.83h-5.83zM367.08 139.84h5.83v5.83h-5.83zM378.74 139.84h5.83v5.83h-5.83zM390.39 139.84h5.83v5.83h-5.83zM402.04 139.84h5.83v5.83h-5.83zM413.70 139.84h5.83v5.83h-5.83zM425.35 139.84h5.83v5.83h-5.83zM0.00 145.67h5.83v5.83h-5.83zM11.65 145.67h5.83v5.83h-5.83zM23.31 145.67h5.83v5.83h-5.83zM34.96 145.67h5.83v5.83h-5.83zM46.61 145.67h5.83v5.83h-5.83zM58.27 145.67h5.83v5.83h-5.83zM69.92 145.67h5.83v5.83h-5.83zM81.57 145.67h5.83v5.83h-5.83zM93.23 145.67h5.83v5.83h-5.83zM104.88 145.67h5.83v5.83h-5.83zM116.53 145.67h5.83v5.83h-5.83zM128.19 145.67h5.83v5.83h-5.83zM139.84 145.67h5.83v5.83h-5.83zM151.49 145.67h5.83v5.83h-5.83zM163.15 145.67h5.83v5.83h-5.83zM174.80 145.67h5.83v5.83h-5.83zM186.45 145.67h5.83v5.83h-5.83zM198.11 145.67h5.83v5.83h-5.83zM209.76 145.67h5.83v5.83h-5.83zM221.41 145.67h5.83v5.83h-5.83zM233.07 145.67h5.83v5.83h-5.83zM244.72 145.67h5.83v5.83h-5.83zM256.37 145.67h5.83v5.83h-5.83zM268.03 145.67h5.83v5.83h-5.83zM279.68 145.67h5.83v5.83h-5.83zM291.33 145.67h5.83v5.83h-5.83zM302.99 145.67h5.83v5.83h-5.83zM314.64 145.67h5.83v5.83h-5.83zM326.30 145.67h5.83v5.83h-5.83zM337.95 145.67h5.83v5.83h-5.83zM349.60 145.67h5.83v5.83h-5.83zM361.26 145.67h5.83v5.83h-5.83zM372.91 145.67h5.83v5.83h-5.83zM384.56 145.67h5.83v5.83h-5.83zM396.22 145.67h5.83v5.83h-5.83zM407.87 145.67h5.83v5.83h-5.83zM419.52 145.67h5.83v5.83h-5.83zM431.18 145.67h5.82v5.83h-5.82zM5.83 151.49h5.83v5.83h-5.83zM17.48 151.49h5.83v5.83h-5.83zM29.13 151.49h5.83v5.83h-5.83zM40.79 151.49h5.83v5.83h-5.83zM52.44 151.49h5.83v5.83h-5.83zM64.09 151.49h5.83v5.83h-5.83zM75.75 151.49h5.83v5.83h-5.83zM87.40 151.49h5.83v5.83h-5.83zM99.05 151.49h5.83v5.83h-5.83zM110.71 151.49h5.83v5.83h-5.83zM122.36 151.49h5.83v5.83h-5.83zM134.01 151.49h5.83v5.83h-5.83zM145.67 151.49h5.83v5.83h-5.83zM157.32 151.49h5.83v5.83h-5.83zM168.97 151.49h5.83v5.83h-5.83zM180.63 151.49h5.83v5.83h-5.83zM192.28 151.49h5.83v5.83h-5.83zM203.93 151.49h5.83v5.83h-5.83zM215.59 151.49h5.83v5.83h-5.83zM227.24 151.49h5.83v5.83h-5.83zM238.89 151.49h5.83v5.83h-5.83zM250.55 151.49h5.83v5.83h-5.83zM262.20 151.49h5.83v5.83h-5.83zM273.85 151.49h5.83v5.83h-5.83zM285.51 151.49h5.83v5.83h-5.83zM297.16 151.49h5.83v5.83h-5.83zM308.82 151.49h5.83v5.83h-5.83zM320.47 151.49h5.83v5.83h-5.83zM332.12 151.49h5.83v5.83h-5.83zM343.78 151.49h5.83v5.83h-5.83zM355.43 151.49h5.83v5.83h-5.83zM367.08 151.49h5.83v5.83h-5.83zM378.74 151.49h5.83v5.83h-5.83zM390.39 151.49h5.83v5.83h-5.83zM402.04 151.49h5.83v5.83h-5.83zM413.70 151.49h5.83v5.83h-5.83zM425.35 151.49h5.83v5.83h-5.83zM0.00 157.32h5.83v5.83h-5.83zM11.65 157.32h5.83v5.83h-5.83zM23.31 157.32h5.83v5.83h-5.83zM34.96 157.32h5.83v5.83h-5.83zM46.61 157.32h5.83v5.83h-5.83zM58.27 157.32h5.83v5.83h-5.83zM69.92 157.32h5.83v5.83h-5.83zM81.57 157.32h5.83v5.83h-5.83zM93.23 157.32h5.83v5.83h-5.83zM104.88 157.32h5.83v5.83h-5.83zM116.53 157.32h5.83v5.83h-5.83zM128.19 157.32h5.83v5.83h-5.83zM139.84 157.32h5.83v5.83h-5.83zM151.49 157.32h5.83v5.83h-5.83zM163.15 157.32h5.83v5.83h-5.83zM174.80 157.32h5.83v5.83h-5.83zM186.45 157.32h5.83v5.83h-5.83zM198.11 157.32h5.83v5.83h-5.83zM209.76 157.32h5.83v5.83h-5.83zM221.41 157.32h5.83v5.83h-5.83zM233.07 157.32h5.83v5.83h-5.83zM244.72 157.32h5.83v5.83h-5.83zM256.37 157.32h5.83v5.83h-5.83zM268.03 157.32h5.83v5.83h-5.83zM279.68 157.32h5.83v5.83h-5.83zM291.33 157.32h5.83v5.83h-5.83zM302.99 157.32h5.83v5.83h-5.83zM314.64 157.32h5.83v5.83h-5.83zM326.30 157.32h5.83v5.83h-5.83zM337.95 157.32h5.83v5.83h-5.83zM349.60 157.32h5.83v5.83h-5.83zM361.26 157.32h5.83v5.83h-5.83zM372.91 157.32h5.83v5.83h-5.83zM384.56 157.32h5.83v5.83h-5.83zM396.22 157.32h5.83v5.83h-5.83zM407.87 157.32h5.83v5.83h-5.83zM419.52 157.32h5.83v5.83h-5.83zM431.18 157.32h5.82v5.83h-5.82zM5.83 163.15h5.83v5.83h-5.83zM17.48 163.15h5.83v5.83h-5.83zM29.13 163.15h5.83v5.83h-5.83zM40.79 163.15h5.83v5.83h-5.83zM52.44 163.15h5.83v5.83h-5.83zM64.09 163.15h5.83v5.83h-5.83zM75.75 163.15h5.83v5.83h-5.83zM87.40 163.15h5.83v5.83h-5.83zM99.05 163.15h5.83v5.83h-5.83zM110.71 163.15h5.83v5.83h-5.83zM122.36 163.15h5.83v5.83h-5.83zM134.01 163.15h5.83v5.83h-5.83zM145.67 163.15h5.83v5.83h-5.83zM157.32 163.15h5.83v5.83h-5.83zM168.97 163.15h5.83v5.83h-5.83zM180.63 163.15h5.83v5.83h-5.83zM192.28 163.15h5.83v5.83h-5.83zM203.93 163.15h5.83v5.83h-5.83zM215.59 163.15h5.83v5.83h-5.83zM227.24 163.15h5.83v5.83h-5.83zM238.89 163.15h5.83v5.83h-5.83zM250.55 163.15h5.83v5.83h-5.83zM262.20 163.15h5.83v5.83h-5.83zM273.85 163.15h5.83v5.83h-5.83zM285.51 163.15h5.83v5.83h-5.83zM297.16 163.15h5.83v5.83h-5.83zM308.82 163.15h5.83v5.83h-5.83zM320.47 163.15h5.83v5.83h-5.83zM332.12 163.15h5.83v5.83h-5.83zM343.78 163.15h5.83v5.83h-5.83zM355.43 163.15h5.83v5.83h-5.83zM367.08 163.15h5.83v5.83h-5.83zM378.74 163.15h5.83v5.83h-5.83zM390.39 163.15h5.83v5.83h-5.83zM402.04 163.15h5.83v5.83h-5.83zM413.70 163.15h5.83v5.83h-5.83zM425.35 163.15h5.83v5.83h-5.83zM0.00 168.97h5.83v5.83h-5.83zM11.65 168.97h5.83v5.83h-5.83zM23.31 168.97h5.83v5.83h-5.83zM34.96 168.97h5.83v5.83h-5.83zM46.61 168.97h5.83v5.83h-5.83zM58.27 168.97h5.83v5.83h-5.83zM69.92 168.97h5.83v5.83h-5.83zM81.57 168.97h5.83v5.83h-5.83zM93.23 168.97h5.83v5.83h-5.83zM104.88 168.97h5.83v5.83h-5.83zM116.53 168.97h5.83v5.83h-5.83zM128.19 168.97h5.83v5.83h-5.83zM139.84 168.97h5.83v5.83h-5.83zM151.49 168.97h5.83v5.83h-5.83zM163.15 168.97h5.83v5.83h-5.83zM174.80 168.97h5.83v5.83h-5.83zM186.45 168.97h5.83v5.83h-5.83zM198.11 168.97h5.83v5.83h-5.83zM209.76 168.97h5.83v5.83h-5.83zM221.41 168.97h5.83v5.83h-5.83zM233.07 168.97h5.83v5.83h-5.83zM244.72 168.97h5.83v5.83h-5.83zM256.37 168.97h5.83v5.83h-5.83zM268.03 168.97h5.83v5.83h-5.83zM279.68 168.97h5.83v5.83h-5.83zM291.33 168.97h5.83v5.83h-5.83zM302.99 168.97h5.83v5.83h-5.83zM314.64 168.97h5.83v5.83h-5.83zM326.30 168.97h5.83v5.83h-5.83zM337.95 168.97h5.83v5.83h-5.83zM349.60 168.97h5.83v5.83h-5.83zM361.26 168.97h5.83v5.83h-5.83zM372.91 168.97h5.83v5.83h-5.83zM384.56 168.97h5.83v5.83h-5.83zM396.22 168.97h5.83v5.83h-5.83zM407.87 168.97h5.83v5.83h-5.83zM419.52 168.97h5.83v5.83h-5.83zM431.18 168.97h5.82v5.83h-5.82zM5.83 174.80h5.83v5.83h-5.83zM17.48 174.80h5.83v5.83h-5.83zM29.13 174.80h5.83v5.83h-5.83zM40.79 174.80h5.83v5.83h-5.83zM52.44 174.80h5.83v5.83h-5.83zM64.09 174.80h5.83v5.83h-5.83zM75.75 174.80h5.83v5.83h-5.83zM87.40 174.80h5.83v5.83h-5.83zM99.05 174.80h5.83v5.83h-5.83zM110.71 174.80h5.83v5.83h-5.83zM122.36 174.80h5.83v5.83h-5.83zM134.01 174.80h5.83v5.83h-5.83zM145.67 174.80h5.83v5.83h-5.83zM157.32 174.80h5.83v5.83h-5.83zM168.97 174.80h5.83v5.83h-5.83zM180.63 174.80h5.83v5.83h-5.83zM192.28 174.80h5.83v5.83h-5.83zM203.93 174.80h5.83v5.83h-5.83zM215.59 174.80h5.83v5.83h-5.83zM227.24 174.80h5.83v5.83h-5.83zM238.89 174.80h5.83v5.83h-5.83zM250.55 174.80h5.83v5.83h-5.83zM262.20 174.80h5.83v5.83h-5.83zM273.85 174.80h5.83v5.83h-5.83zM285.51 174.80h5.83v5.83h-5.83zM297.16 174.80h5.83v5.83h-5.83zM308.82 174.80h5.83v5.83h-5.83zM320.47 174.80h5.83v5.83h-5.83zM332.12 174.80h5.83v5.83h-5.83zM343.78 174.80h5.83v5.83h-5.83zM355.43 174.80h5.83v5.83h-5.83zM367.08 174.80h5.83v5.83h-5.83zM378.74 174.80h5.83v5.83h-5.83zM390.39 174.80h5.83v5.83h-5.83zM402.04 174.80h5.83v5.83h-5.83zM413.70 174.80h5.83v5.83h-5.83zM425.35 174.80h5.83v5.83h-5.83zM0.00 180.63h5.83v5.83h-5.83zM11.65 180.63h5.83v5.83h-5.83zM23.31 180.63h5.83v5.83h-5.83zM34.96 180.63h5.83v5.83h-5.83zM46.61 180.63h5.83v5.83h-5.83zM58.27 180.63h5.83v5.83h-5.83zM69.92 180.63h5.83v5.83h-5.83zM81.57 180.63h5.83v5.83h-5.83zM93.23 180.63h5.83v5.83h-5.83zM104.88 180.63h5.83v5.83h-5.83zM116.53 180.63h5.83v5.83h-5.83zM128.19 180.63h5.83v5.83h-5.83zM139.84 180.63h5.83v5.83h-5.83zM151.49 180.63h5.83v5.83h-5.83zM163.15 180.63h5.83v5.83h-5.83zM174.80 180.63h5.83v5.83h-5.83zM186.45 180.63h5.83v5.83h-5.83zM198.11 180.63h5.83v5.83h-5.83zM209.76 180.63h5.83v5.83h-5.83zM221.41 180.63h5.83v5.83h-5.83zM233.07 180.63h5.83v5.83h-5.83zM244.72 180.63h5.83v5.83h-5.83zM256.37 180.63h5.83v5.83h-5.83zM268.03 180.63h5.83v5.83h-5.83zM279.68 180.63h5.83v5.83h-5.83zM291.33 180.63h5.83v5.83h-5.83zM302.99 180.63h5.83v5.83h-5.83zM314.64 180.63h5.83v5.83h-5.83zM326.30 180.63h5.83v5.83h-5.83zM337.95 180.63h5.83v5.83h-5.83zM349.60 180.63h5.83v5.83h-5.83zM361.26 180.63h5.83v5.83h-5.83zM372.91 180.63h5.83v5.83h-5.83zM384.56 180.63h5.83v5.83h-5.83zM396.22 180.63h5.83v5.83h-5.83zM407.87 180.63h5.83v5.83h-5.83zM419.52 180.63h5.83v5.83h-5.83zM431.18 180.63h5.82v5.83h-5.82zM5.83 186.45h5.83v5.83h-5.83zM17.48 186.45h5.83v5.83h-5.83zM29.13 186.45h5.83v5.83h-5.83zM40.79 186.45h5.83v5.83h-5.83zM52.44 186.45h5.83v5.83h-5.83zM64.09 186.45h5.83v5.83h-5.83zM75.75 186.45h5.83v5.83h-5.83zM87.40 186.45h5.83v5.83h-5.83zM99.05 186.45h5.83v5.83h-5.83zM110.71 186.45h5.83v5.83h-5.83zM122.36 186.45h5.83v5.83h-5.83zM134.01 186.45h5.83v5.83h-5.83zM145.67 186.45h5.83v5.83h-5.83zM157.32 186.45h5.83v5.83h-5.83zM168.97 186.45h5.83v5.83h-5.83zM180.63 186.45h5.83v5.83h-5.83zM192.28 186.45h5.83v5.83h-5.83zM203.93 186.45h5.83v5.83h-5.83zM215.59 186.45h5.83v5.83h-5.83zM227.24 186.45h5.83v5.83h-5.83zM238.89 186.45h5.83v5.83h-5.83zM250.55 186.45h5.83v5.83h-5.83zM262.20 186.45h5.83v5.83h-5.83zM273.85 186.45h5.83v5.83h-5.83zM285.51 186.45h5.83v5.83h-5.83zM297.16 186.45h5.83v5.83h-5.83zM308.82 186.45h5.83v5.83h-5.83zM320.47 186.45h5.83v5.83h-5.83zM332.12 186.45h5.83v5.83h-5.83zM343.78 186.45h5.83v5.83h-5.83zM355.43 186.45h5.83v5.83h-5.83zM367.08 186.45h5.83v5.83h-5.83zM378.74 186.45h5.83v5.83h-5.83zM390.39 186.45h5.83v5.83h-5.83zM402.04 186.45h5.83v5.83h-5.83zM413.70 186.45h5.83v5.83h-5.83zM425.35 186.45h5.83v5.83h-5.83zM0.00 192.28h5.83v5.83h-5.83zM11.65 192.28h5.83v5.83h-5.83zM23.31 192.28h5.83v5.83h-5.83zM34.96 192.28h5.83v5.83h-5.83zM46.61 192.28h5.83v5.83h-5.83zM58.27 192.28h5.83v5.83h-5.83zM69.92 192.28h5.83v5.83h-5.83zM81.57 192.28h5.83v5.83h-5.83zM93.23 192.28h5.83v5.83h-5.83zM104.88 192.28h5.83v5.83h-5.83zM116.53 192.28h5.83v5.83h-5.83zM128.19 192.28h5.83v5.83h-5.83zM139.84 192.28h5.83v5.83h-5.83zM151.49 192.28h5.83v5.83h-5.83zM163.15 192.28h5.83v5.83h-5.83zM174.80 192.28h5.83v5.83h-5.83zM186.45 192.28h5.83v5.83h-5.83zM198.11 192.28h5.83v5.83h-5.83zM209.76 192.28h5.83v5.83h-5.83zM221.41 192.28h5.83v5.83h-5.83zM233.07 192.28h5.83v5.83h-5.83zM244.72 192.28h5.83v5.83h-5.83zM256.37 192.28h5.83v5.83h-5.83zM268.03 192.28h5.83v5.83h-5.83zM279.68 192.28h5.83v5.83h-5.83zM291.33 192.28h5.83v5.83h-5.83zM302.99 192.28h5.83v5.83h-5.83zM314.64 192.28h5.83v5.83h-5.83zM326.30 192.28h5.83v5.83h-5.83zM337.95 192.28h5.83v5.83h-5.83zM349.60 192.28h5.83v5.83h-5.83zM361.26 192.28h5.83v5.83h-5.83zM372.91 192.28h5.83v5.83h-5.83zM384.56 192.28h5.83v5.83h-5.83zM396.22 192.28h5.83v5.83h-5.83zM407.87 192.28h5.83v5.83h-5.83zM419.52 192.28h5.83v5.83h-5.83zM431.18 192.28h5.82v5.83h-5.82zM5.83 198.11h5.83v5.83h-5.83zM17.48 198.11h5.83v5.83h-5.83zM29.13 198.11h5.83v5.83h-5.83zM40.79 198.11h5.83v5.83h-5.83zM52.44 198.11h5.83v5.83h-5.83zM64.09 198.11h5.83v5.83h-5.83zM75.75 198.11h5.83v5.83h-5.83zM87.40 198.11h5.83v5.83h-5.83zM99.05 198.11h5.83v5.83h-5.83zM110.71 198.11h5.83v5.83h-5.83zM122.36 198.11h5.83v5.83h-5.83zM134.01 198.11h5.83v5.83h-5.83zM145.67 198.11h5.83v5.83h-5.83zM157.32 198.11h5.83v5.83h-5.83zM168.97 198.11h5.83v5.83h-5.83zM180.63 198.11h5.83v5.83h-5.83zM192.28 198.11h5.83v5.83h-5.83zM203.93 198.11h5.83v5.83h-5.83zM215.59 198.11h5.83v5.83h-5.83zM227.24 198.11h5.83v5.83h-5.83zM238.89 198.11h5.83v5.83h-5.83zM250.55 198.11h5.83v5.83h-5.83zM262.20 198.11h5.83v5.83h-5.83zM273.85 198.11h5.83v5.83h-5.83zM285.51 198.11h5.83v5.83h-5.83zM297.16 198.11h5.83v5.83h-5.83zM308.82 198.11h5.83v5.83h-5.83zM320.47 198.11h5.83v5.83h-5.83zM332.12 198.11h5.83v5.83h-5.83zM343.78 198.11h5.83v5.83h-5.83zM355.43 198.11h5.83v5.83h-5.83zM367.08 198.11h5.83v5.83h-5.83zM378.74 198.11h5.83v5.83h-5.83zM390.39 198.11h5.83v5.83h-5.83zM402.04 198.11h5.83v5.83h-5.83zM413.70 198.11h5.83v5.83h-5.83zM425.35 198.11h5.83v5.83h-5.83zM0.00 203.93h5.83v5.83h-5.83zM11.65 203.93h5.83v5.83h-5.83zM23.31 203.93h5.83v5.83h-5.83zM34.96 203.93h5.83v5.83h-5.83zM46.61 203.93h5.83v5.83h-5.83zM58.27 203.93h5.83v5.83h-5.83zM69.92 203.93h5.83v5.83h-5.83zM81.57 203.93h5.83v5.83h-5.83zM93.23 203.93h5.83v5.83h-5.83zM104.88 203.93h5.83v5.83h-5.83zM116.53 203.93h5.83v5.83h-5.83zM128.19 203.93h5.83v5.83h-5.83zM139.84 203.93h5.83v5.83h-5.83zM151.49 203.93h5.83v5.83h-5.83zM163.15 203.93h5.83v5.83h-5.83zM174.80 203.93h5.83v5.83h-5.83zM186.45 203.93h5.83v5.83h-5.83zM198.11 203.93h5.83v5.83h-5.83zM209.76 203.93h5.83v5.83h-5.83zM221.41 203.93h5.83v5.83h-5.83zM233.07 203.93h5.83v5.83h-5.83zM244.72 203.93h5.83v5.83h-5.83zM256.37 203.93h5.83v5.83h-5.83zM268.03 203.93h5.83v5.83h-5.83zM279.68 203.93h5.83v5.83h-5.83zM291.33 203.93h5.83v5.83h-5.83zM302.99 203.93h5.83v5.83h-5.83zM314.64 203.93h5.83v5.83h-5.83zM326.30 203.93h5.83v5.83h-5.83zM337.95 203.93h5.83v5.83h-5.83zM349.60 203.93h5.83v5.83h-5.83zM361.26 203.93h5.83v5.83h-5.83zM372.91 203.93h5.83v5.83h-5.83zM384.56 203.93h5.83v5.83h-5.83zM396.22 203.93h5.83v5.83h-5.83zM407.87 203.93h5.83v5.83h-5.83zM419.52 203.93h5.83v5.83h-5.83zM431.18 203.93h5.82v5.83h-5.82zM5.83 209.76h5.83v5.83h-5.83zM17.48 209.76h5.83v5.83h-5.83zM29.13 209.76h5.83v5.83h-5.83zM40.79 209.76h5.83v5.83h-5.83zM52.44 209.76h5.83v5.83h-5.83zM64.09 209.76h5.83v5.83h-5.83zM75.75 209.76h5.83v5.83h-5.83zM87.40 209.76h5.83v5.83h-5.83zM99.05 209.76h5.83v5.83h-5.83zM110.71 209.76h5.83v5.83h-5.83zM122.36 209.76h5.83v5.83h-5.83zM134.01 209.76h5.83v5.83h-5.83zM145.67 209.76h5.83v5.83h-5.83zM157.32 209.76h5.83v5.83h-5.83zM168.97 209.76h5.83v5.83h-5.83zM180.63 209.76h5.83v5.83h-5.83zM192.28 209.76h5.83v5.83h-5.83zM203.93 209.76h5.83v5.83h-5.83zM215.59 209.76h5.83v5.83h-5.83zM227.24 209.76h5.83v5.83h-5.83zM238.89 209.76h5.83v5.83h-5.83zM250.55 209.76h5.83v5.83h-5.83zM262.20 209.76h5.83v5.83h-5.83zM273.85 209.76h5.83v5.83h-5.83zM285.51 209.76h5.83v5.83h-5.83zM297.16 209.76h5.83v5.83h-5.83zM308.82 209.76h5.83v5.83h-5.83zM320.47 209.76h5.83v5.83h-5.83zM332.12 209.76h5.83v5.83h-5.83zM343.78 209.76h5.83v5.83h-5.83zM355.43 209.76h5.83v5.83h-5.83zM367.08 209.76h5.83v5.83h-5.83zM378.74 209.76h5.83v5.83h-5.83zM390.39 209.76h5.83v5.83h-5.83zM402.04 209.76h5.83v5.83h-5.83zM413.70 209.76h5.83v5.83h-5.83zM425.35 209.76h5.83v5.83h-5.83zM0.00 215.59h5.83v5.83h-5.83zM11.65 215.59h5.83v5.83h-5.83zM23.31 215.59h5.83v5.83h-5.83zM34.96 215.59h5.83v5.83h-5.83zM46.61 215.59h5.83v5.83h-5.83zM58.27 215.59h5.83v5.83h-5.83zM69.92 215.59h5.83v5.83h-5.83zM81.57 215.59h5.83v5.83h-5.83zM93.23 215.59h5.83v5.83h-5.83zM104.88 215.59h5.83v5.83h-5.83zM116.53 215.59h5.83v5.83h-5.83zM128.19 215.59h5.83v5.83h-5.83zM139.84 215.59h5.83v5.83h-5.83zM151.49 215.59h5.83v5.83h-5.83zM163.15 215.59h5.83v5.83h-5.83zM174.80 215.59h5.83v5.83h-5.83zM186.45 215.59h5.83v5.83h-5.83zM198.11 215.59h5.83v5.83h-5.83zM209.76 215.59h5.83v5.83h-5.83zM221.41 215.59h5.83v5.83h-5.83zM233.07 215.59h5.83v5.83h-5.83zM244.72 215.59h5.83v5.83h-5.83zM256.37 215.59h5.83v5.83h-5.83zM268.03 215.59h5.83v5.83h-5.83zM279.68 215.59h5.83v5.83h-5.83zM291.33 215.59h5.83v5.83h-5.83zM302.99 215.59h5.83v5.83h-5.83zM314.64 215.59h5.83v5.83h-5.83zM326.30 215.59h5.83v5.83h-5.83zM337.95 215.59h5.83v5.83h-5.83zM349.60 215.59h5.83v5.83h-5.83zM361.26 215.59h5.83v5.83h-5.83zM372.91 215.59h5.83v5.83h-5.83zM384.56 215.59h5.83v5.83h-5.83zM396.22 215.59h5.83v5.83h-5.83zM407.87 215.59h5.83v5.83h-5.83zM419.52 215.59h5.83v5.83h-5.83zM431.18 215.59h5.82v5.83h-5.82zM5.83 221.41h5.83v5.83h-5.83zM17.48 221.41h5.83v5.83h-5.83zM29.13 221.41h5.83v5.83h-5.83zM40.79 221.41h5.83v5.83h-5.83zM52.44 221.41h5.83v5.83h-5.83zM64.09 221.41h5.83v5.83h-5.83zM75.75 221.41h5.83v5.83h-5.83zM87.40 221.41h5.83v5.83h-5.83zM99.05 221.41h5.83v5.83h-5.83zM110.71 221.41h5.83v5.83h-5.83zM122.36 221.41h5.83v5.83h-5.83zM134.01 221.41h5.83v5.83h-5.83zM145.67 221.41h5.83v5.83h-5.83zM157.32 221.41h5.83v5.83h-5.83zM168.97 221.41h5.83v5.83h-5.83zM180.63 221.41h5.83v5.83h-5.83zM192.28 221.41h5.83v5.83h-5.83zM203.93 221.41h5.83v5.83h-5.83zM215.59 221.41h5.83v5.83h-5.83zM227.24 221.41h5.83v5.83h-5.83zM238.89 221.41h5.83v5.83h-5.83zM250.55 221.41h5.83v5.83h-5.83zM262.20 221.41h5.83v5.83h-5.83zM273.85 221.41h5.83v5.83h-5.83zM285.51 221.41h5.83v5.83h-5.83zM297.16 221.41h5.83v5.83h-5.83zM308.82 221.41h5.83v5.83h-5.83zM320.47 221.41h5.83v5.83h-5.83zM332.12 221.41h5.83v5.83h-5.83zM343.78 221.41h5.83v5.83h-5.83zM355.43 221.41h5.83v5.83h-5.83zM367.08 221.41h5.83v5.83h-5.83zM378.74 221.41h5.83v5.83h-5.83zM390.39 221.41h5.83v5.83h-5.83zM402.04 221.41h5.83v5.83h-5.83zM413.70 221.41h5.83v5.83h-5.83zM425.35 221.41h5.83v5.83h-5.83zM0.00 227.24h5.83v5.83h-5.83zM11.65 227.24h5.83v5.83h-5.83zM23.31 227.24h5.83v5.83h-5.83zM34.96 227.24h5.83v5.83h-5.83zM46.61 227.24h5.83v5.83h-5.83zM58.27 227.24h5.83v5.83h-5.83zM69.92 227.24h5.83v5.83h-5.83zM81.57 227.24h5.83v5.83h-5.83zM93.23 227.24h5.83v5.83h-5.83zM104.88 227.24h5.83v5.83h-5.83zM116.53 227.24h5.83v5.83h-5.83zM128.19 227.24h5.83v5.83h-5.83zM139.84 227.24h5.83v5.83h-5.83zM151.49 227.24h5.83v5.83h-5.83zM163.15 227.24h5.83v5.83h-5.83zM174.80 227.24h5.83v5.83h-5.83zM186.45 227.24h5.83v5.83h-5.83zM198.11 227.24h5.83v5.83h-5.83zM209.76 227.24h5.83v5.83h-5.83zM221.41 227.24h5.83v5.83h-5.83zM233.07 227.24h5.83v5.83h-5.83zM244.72 227.24h5.83v5.83h-5.83zM256.37 227.24h5.83v5.83h-5.83zM268.03 227.24h5.83v5.83h-5.83zM279.68 227.24h5.83v5.83h-5.83zM291.33 227.24h5.83v5.83h-5.83zM302.99 227.24h5.83v5.83h-5.83zM314.64 227.24h5.83v5.83h-5.83zM326.30 227.24h5.83v5.83h-5.83zM337.95 227.24h5.83v5.83h-5.83zM349.60 227.24h5.83v5.83h-5.83zM361.26 227.24h5.83v5.83h-5.83zM372.91 227.24h5.83v5.83h-5.83zM384.56 227.24h5.83v5.83h-5.83zM396.22 227.24h5.83v5.83h-5.83zM407.87 227.24h5.83v5.83h-5.83zM419.52 227.24h5.83v5.83h-5.83zM431.18 227.24h5.82v5.83h-5.82zM5.83 233.07h5.83v5.83h-5.83zM17.48 233.07h5.83v5.83h-5.83zM29.13 233.07h5.83v5.83h-5.83zM40.79 233.07h5.83v5.83h-5.83zM52.44 233.07h5.83v5.83h-5.83zM64.09 233.07h5.83v5.83h-5.83zM75.75 233.07h5.83v5.83h-5.83zM87.40 233.07h5.83v5.83h-5.83zM99.05 233.07h5.83v5.83h-5.83zM110.71 233.07h5.83v5.83h-5.83zM122.36 233.07h5.83v5.83h-5.83zM134.01 233.07h5.83v5.83h-5.83zM145.67 233.07h5.83v5.83h-5.83zM157.32 233.07h5.83v5.83h-5.83zM168.97 233.07h5.83v5.83h-5.83zM180.63 233.07h5.83v5.83h-5.83zM192.28 233.07h5.83v5.83h-5.83zM203.93 233.07h5.83v5.83h-5.83zM215.59 233.07h5.83v5.83h-5.83zM227.24 233.07h5.83v5.83h-5.83zM238.89 233.07h5.83v5.83h-5.83zM250.55 233.07h5.83v5.83h-5.83zM262.20 233.07h5.83v5.83h-5.83zM273.85 233.07h5.83v5.83h-5.83zM285.51 233.07h5.83v5.83h-5.83zM297.16 233.07h5.83v5.83h-5.83zM308.82 233.07h5.83v5.83h-5.83zM320.47 233.07h5.83v5.83h-5.83zM332.12 233.07h5.83v5.83h-5.83zM343.78 233.07h5.83v5.83h-5.83zM355.43 233.07h5.83v5.83h-5.83zM367.08 233.07h5.83v5.83h-5.83zM378.74 233.07h5.83v5.83h-5.83zM390.39 233.07h5.83v5.83h-5.83zM402.04 233.07h5.83v5.83h-5.83zM413.70 233.07h5.83v5.83h-5.83zM425.35 233.07h5.83v5.83h-5.83zM0.00 238.89h5.83v5.83h-5.83zM11.65 238.89h5.83v5.83h-5.83zM23.31 238.89h5.83v5.83h-5.83zM34.96 238.89h5.83v5.83h-5.83zM46.61 238.89h5.83v5.83h-5.83zM58.27 238.89h5.83v5.83h-5.83zM69.92 238.89h5.83v5.83h-5.83zM81.57 238.89h5.83v5.83h-5.83zM93.23 238.89h5.83v5.83h-5.83zM104.88 238.89h5.83v5.83h-5.83zM116.53 238.89h5.83v5.83h-5.83zM128.19 238.89h5.83v5.83h-5.83zM139.84 238.89h5.83v5.83h-5.83zM151.49 238.89h5.83v5.83h-5.83zM163.15 238.89h5.83v5.83h-5.83zM174.80 238.89h5.83v5.83h-5.83zM186.45 238.89h5.83v5.83h-5.83zM198.11 238.89h5.83v5.83h-5.83zM209.76 238.89h5.83v5.83h-5.83zM221.41 238.89h5.83v5.83h-5.83zM233.07 238.89h5.83v5.83h-5.83zM244.72 238.89h5.83v5.83h-5.83zM256.37 238.89h5.83v5.83h-5.83zM268.03 238.89h5.83v5.83h-5.83zM279.68 238.89h5.83v5.83h-5.83zM291.33 238.89h5.83v5.83h-5.83zM302.99 238.89h5.83v5.83h-5.83zM314.64 238.89h5.83v5.83h-5.83zM326.30 238.89h5.83v5.83h-5.83zM337.95 238.89h5.83v5.83h-5.83zM349.60 238.89h5.83v5.83h-5.83zM361.26 238.89h5.83v5.83h-5.83zM372.91 238.89h5.83v5.83h-5.83zM384.56 238.89h5.83v5.83h-5.83zM396.22 238.89h5.83v5.83h-5.83zM407.87 238.89h5.83v5.83h-5.83zM419.52 238.89h5.83v5.83h-5.83zM431.18 238.89h5.82v5.83h-5.82zM5.83 244.72h5.83v5.83h-5.83zM17.48 244.72h5.83v5.83h-5.83zM29.13 244.72h5.83v5.83h-5.83zM40.79 244.72h5.83v5.83h-5.83zM52.44 244.72h5.83v5.83h-5.83zM64.09 244.72h5.83v5.83h-5.83zM75.75 244.72h5.83v5.83h-5.83zM87.40 244.72h5.83v5.83h-5.83zM99.05 244.72h5.83v5.83h-5.83zM110.71 244.72h5.83v5.83h-5.83zM122.36 244.72h5.83v5.83h-5.83zM134.01 244.72h5.83v5.83h-5.83zM145.67 244.72h5.83v5.83h-5.83zM157.32 244.72h5.83v5.83h-5.83zM168.97 244.72h5.83v5.83h-5.83zM180.63 244.72h5.83v5.83h-5.83zM192.28 244.72h5.83v5.83h-5.83zM203.93 244.72h5.83v5.83h-5.83zM215.59 244.72h5.83v5.83h-5.83zM227.24 244.72h5.83v5.83h-5.83zM238.89 244.72h5.83v5.83h-5.83zM250.55 244.72h5.83v5.83h-5.83zM262.20 244.72h5.83v5.83h-5.83zM273.85 244.72h5.83v5.83h-5.83zM285.51 244.72h5.83v5.83h-5.83zM297.16 244.72h5.83v5.83h-5.83zM308.82 244.72h5.83v5.83h-5.83zM320.47 244.72h5.83v5.83h-5.83zM332.12 244.72h5.83v5.83h-5.83zM343.78 244.72h5.83v5.83h-5.83zM355.43 244.72h5.83v5.83h-5.83zM367.08 244.72h5.83v5.83h-5.83zM378.74 244.72h5.83v5.83h-5.83zM390.39 244.72h5.83v5.83h-5.83zM402.04 244.72h5.83v5.83h-5.83zM413.70 244.72h5.83v5.83h-5.83zM425.35 244.72h5.83v5.83h-5.83zM0.00 250.55h5.83v5.83h-5.83zM11.65 250.55h5.83v5.83h-5.83zM23.31 250.55h5.83v5.83h-5.83zM34.96 250.55h5.83v5.83h-5.83zM46.61 250.55h5.83v5.83h-5.83zM58.27 250.55h5.83v5.83h-5.83zM69.92 250.55h5.83v5.83h-5.83zM81.57 250.55h5.83v5.83h-5.83zM93.23 250.55h5.83v5.83h-5.83zM104.88 250.55h5.83v5.83h-5.83zM116.53 250.55h5.83v5.83h-5.83zM128.19 250.55h5.83v5.83h-5.83zM139.84 250.55h5.83v5.83h-5.83zM151.49 250.55h5.83v5.83h-5.83zM163.15 250.55h5.83v5.83h-5.83zM174.80 250.55h5.83v5.83h-5.83zM186.45 250.55h5.83v5.83h-5.83zM198.11 250.55h5.83v5.83h-5.83zM209.76 250.55h5.83v5.83h-5.83zM221.41 250.55h5.83v5.83h-5.83zM233.07 250.55h5.83v5.83h-5.83zM244.72 250.55h5.83v5.83h-5.83zM256.37 250.55h5.83v5.83h-5.83zM268.03 250.55h5.83v5.83h-5.83zM279.68 250.55h5.83v5.83h-5.83zM291.33 250.55h5.83v5.83h-5.83zM302.99 250.55h5.83v5.83h-5.83zM314.64 250.55h5.83v5.83h-5.83zM326.30 250.55h5.83v5.83h-5.83zM337.95 250.55h5.83v5.83h-5.83zM349.60 250.55h5.83v5.83h-5.83zM361.26 250.55h5.83v5.83h-5.83zM372.91 250.55h5.83v5.83h-5.83zM384.56 250.55h5.83v5.83h-5.83zM396.22 250.55h5.83v5.83h-5.83zM407.87 250.55h5.83v5.83h-5.83zM419.52 250.55h5.83v5.83h-5.83zM431.18 250.55h5.82v5.83h-5.82zM5.83 256.37h5.83v5.83h-5.83zM17.48 256.37h5.83v5.83h-5.83zM29.13 256.37h5.83v5.83h-5.83zM40.79 256.37h5.83v5.83h-5.83zM52.44 256.37h5.83v5.83h-5.83zM64.09 256.37h5.83v5.83h-5.83zM75.75 256.37h5.83v5.83h-5.83zM87.40 256.37h5.83v5.83h-5.83zM99.05 256.37h5.83v5.83h-5.83zM110.71 256.37h5.83v5.83h-5.83zM122.36 256.37h5.83v5.83h-5.83zM134.01 256.37h5.83v5.83h-5.83zM145.67 256.37h5.83v5.83h-5.83zM157.32 256.37h5.83v5.83h-5.83zM168.97 256.37h5.83v5.83h-5.83zM180.63 256.37h5.83v5.83h-5.83zM192.28 256.37h5.83v5.83h-5.83zM203.93 256.37h5.83v5.83h-5.83zM215.59 256.37h5.83v5.83h-5.83zM227.24 256.37h5.83v5.83h-5.83zM238.89 256.37h5.83v5.83h-5.83zM250.55 256.37h5.83v5.83h-5.83zM262.20 256.37h5.83v5.83h-5.83zM273.85 256.37h5.83v5.83h-5.83zM285.51 256.37h5.83v5.83h-5.83zM297.16 256.37h5.83v5.83h-5.83zM308.82 256.37h5.83v5.83h-5.83zM320.47 256.37h5.83v5.83h-5.83zM332.12 256.37h5.83v5.83h-5.83zM343.78 256.37h5.83v5.83h-5.83zM355.43 256.37h5.83v5.83h-5.83zM367.08 256.37h5.83v5.83h-5.83zM378.74 256.37h5.83v5.83h-5.83zM390.39 256.37h5.83v5.83h-5.83zM402.04 256.37h5.83v5.83h-5.83zM413.70 256.37h5.83v5.83h-5.83zM425.35 256.37h5.83v5.83h-5.83zM0.00 262.20h5.83v5.83h-5.83zM11.65 262.20h5.83v5.83h-5.83zM23.31 262.20h5.83v5.83h-5.83zM34.96 262.20h5.83v5.83h-5.83zM46.61 262.20h5.83v5.83h-5.83zM58.27 262.20h5.83v5.83h-5.83zM69.92 262.20h5.83v5.83h-5.83zM81.57 262.20h5.83v5.83h-5.83zM93.23 262.20h5.83v5.83h-5.83zM104.88 262.20h5.83v5.83h-5.83zM116.53 262.20h5.83v5.83h-5.83zM128.19 262.20h5.83v5.83h-5.83zM139.84 262.20h5.83v5.83h-5.83zM151.49 262.20h5.83v5.83h-5.83zM163.15 262.20h5.83v5.83h-5.83zM174.80 262.20h5.83v5.83h-5.83zM186.45 262.20h5.83v5.83h-5.83zM198.11 262.20h5.83v5.83h-5.83zM209.76 262.20h5.83v5.83h-5.83zM221.41 262.20h5.83v5.83h-5.83zM233.07 262.20h5.83v5.83h-5.83zM244.72 262.20h5.83v5.83h-5.83zM256.37 262.20h5.83v5.83h-5.83zM268.03 262.20h5.83v5.83h-5.83zM279.68 262.20h5.83v5.83h-5.83zM291.33 262.20h5.83v5.83h-5.83zM302.99 262.20h5.83v5.83h-5.83zM314.64 262.20h5.83v5.83h-5.83zM326.30 262.20h5.83v5.83h-5.83zM337.95 262.20h5.83v5.83h-5.83zM349.60 262.20h5.83v5.83h-5.83zM361.26 262.20h5.83v5.83h-5.83zM372.91 262.20h5.83v5.83h-5.83zM384.56 262.20h5.83v5.83h-5.83zM396.22 262.20h5.83v5.83h-5.83zM407.87 262.20h5.83v5.83h-5.83zM419.52 262.20h5.83v5.83h-5.83zM431.18 262.20h5.82v5.83h-5.82zM5.83 268.03h5.83v5.83h-5.83zM17.48 268.03h5.83v5.83h-5.83zM29.13 268.03h5.83v5.83h-5.83zM40.79 268.03h5.83v5.83h-5.83zM52.44 268.03h5.83v5.83h-5.83zM64.09 268.03h5.83v5.83h-5.83zM75.75 268.03h5.83v5.83h-5.83zM87.40 268.03h5.83v5.83h-5.83zM99.05 268.03h5.83v5.83h-5.83zM110.71 268.03h5.83v5.83h-5.83zM122.36 268.03h5.83v5.83h-5.83zM134.01 268.03h5.83v5.83h-5.83zM145.67 268.03h5.83v5.83h-5.83zM157.32 268.03h5.83v5.83h-5.83zM168.97 268.03h5.83v5.83h-5.83zM180.63 268.03h5.83v5.83h-5.83zM192.28 268.03h5.83v5.83h-5.83zM203.93 268.03h5.83v5.83h-5.83zM215.59 268.03h5.83v5.83h-5.83zM227.24 268.03h5.83v5.83h-5.83zM238.89 268.03h5.83v5.83h-5.83zM250.55 268.03h5.83v5.83h-5.83zM262.20 268.03h5.83v5.83h-5.83zM273.85 268.03h5.83v5.83h-5.83zM285.51 268.03h5.83v5.83h-5.83zM297.16 268.03h5.83v5.83h-5.83zM308.82 268.03h5.83v5.83h-5.83zM320.47 268.03h5.83v5.83h-5.83zM332.12 268.03h5.83v5.83h-5.83zM343.78 268.03h5.83v5.83h-5.83zM355.43 268.03h5.83v5.83h-5.83zM367.08 268.03h5.83v5.83h-5.83zM378.74 268.03h5.83v5.83h-5.83zM390.39 268.03h5.83v5.83h-5.83zM402.04 268.03h5.83v5.83h-5.83zM413.70 268.03h5.83v5.83h-5.83zM425.35 268.03h5.83v5.83h-5.83zM0.00 273.85h5.83v5.83h-5.83zM11.65 273.85h5.83v5.83h-5.83zM23.31 273.85h5.83v5.83h-5.83zM34.96 273.85h5.83v5.83h-5.83zM46.61 273.85h5.83v5.83h-5.83zM58.27 273.85h5.83v5.83h-5.83zM69.92 273.85h5.83v5.83h-5.83zM81.57 273.85h5.83v5.83h-5.83zM93.23 273.85h5.83v5.83h-5.83zM104.88 273.85h5.83v5.83h-5.83zM116.53 273.85h5.83v5.83h-5.83zM128.19 273.85h5.83v5.83h-5.83zM139.84 273.85h5.83v5.83h-5.83zM151.49 273.85h5.83v5.83h-5.83zM163.15 273.85h5.83v5.83h-5.83zM174.80 273.85h5.83v5.83h-5.83zM186.45 273.85h5.83v5.83h-5.83zM198.11 273.85h5.83v5.83h-5.83zM209.76 273.85h5.83v5.83h-5.83zM221.41 273.85h5.83v5.83h-5.83zM233.07 273.85h5.83v5.83h-5.83zM244.72 273.85h5.83v5.83h-5.83zM256.37 273.85h5.83v5.83h-5.83zM268.03 273.85h5.83v5.83h-5.83zM279.68 273.85h5.83v5.83h-5.83zM291.33 273.85h5.83v5.83h-5.83zM302.99 273.85h5.83v5.83h-5.83zM314.64 273.85h5.83v5.83h-5.83zM326.30 273.85h5.83v5.83h-5.83zM337.95 273.85h5.83v5.83h-5.83zM349.60 273.85h5.83v5.83h-5.83zM361.26 273.85h5.83v5.83h-5.83zM372.91 273.85h5.83v5.83h-5.83zM384.56 273.85h5.83v5.83h-5.83zM396.22 273.85h5.83v5.83h-5.83zM407.87 273.85h5.83v5.83h-5.83zM419.52 273.85h5.83v5.83h-5.83zM431.18 273.85h5.82v5.83h-5.82zM5.83 279.68h5.83v5.83h-5.83zM17.48 279.68h5.83v5.83h-5.83zM29.13 279.68h5.83v5.83h-5.83zM40.79 279.68h5.83v5.83h-5.83zM52.44 279.68h5.83v5.83h-5.83zM64.09 279.68h5.83v5.83h-5.83zM75.75 279.68h5.83v5.83h-5.83zM87.40 279.68h5.83v5.83h-5.83zM99.05 279.68h5.83v5.83h-5.83zM110.71 279.68h5.83v5.83h-5.83zM122.36 279.68h5.83v5.83h-5.83zM134.01 279.68h5.83v5.83h-5.83zM145.67 279.68h5.83v5.83h-5.83zM157.32 279.68h5.83v5.83h-5.83zM168.97 279.68h5.83v5.83h-5.83zM180.63 279.68h5.83v5.83h-5.83zM192.28 279.68h5.83v5.83h-5.83zM203.93 279.68h5.83v5.83h-5.83zM215.59 279.68h5.83v5.83h-5.83zM227.24 279.68h5.83v5.83h-5.83zM238.89 279.68h5.83v5.83h-5.83zM250.55 279.68h5.83v5.83h-5.83zM262.20 279.68h5.83v5.83h-5.83zM273.85 279.68h5.83v5.83h-5.83zM285.51 279.68h5.83v5.83h-5.83zM297.16 279.68h5.83v5.83h-5.83zM308.82 279.68h5.83v5.83h-5.83zM320.47 279.68h5.83v5.83h-5.83zM332.12 279.68h5.83v5.83h-5.83zM343.78 279.68h5.83v5.83h-5.83zM355.43 279.68h5.83v5.83h-5.83zM367.08 279.68h5.83v5.83h-5.83zM378.74 279.68h5.83v5.83h-5.83zM390.39 279.68h5.83v5.83h-5.83zM402.04 279.68h5.83v5.83h-5.83zM413.70 279.68h5.83v5.83h-5.83zM425.35 279.68h5.83v5.83h-5.83zM0.00 285.51h5.83v5.83h-5.83zM11.65 285.51h5.83v5.83h-5.83zM23.31 285.51h5.83v5.83h-5.83zM34.96 285.51h5.83v5.83h-5.83zM46.61 285.51h5.83v5.83h-5.83zM58.27 285.51h5.83v5.83h-5.83zM69.92 285.51h5.83v5.83h-5.83zM81.57 285.51h5.83v5.83h-5.83zM93.23 285.51h5.83v5.83h-5.83zM104.88 285.51h5.83v5.83h-5.83zM116.53 285.51h5.83v5.83h-5.83zM128.19 285.51h5.83v5.83h-5.83zM139.84 285.51h5.83v5.83h-5.83zM151.49 285.51h5.83v5.83h-5.83zM163.15 285.51h5.83v5.83h-5.83zM174.80 285.51h5.83v5.83h-5.83zM186.45 285.51h5.83v5.83h-5.83zM198.11 285.51h5.83v5.83h-5.83zM209.76 285.51h5.83v5.83h-5.83zM221.41 285.51h5.83v5.83h-5.83zM233.07 285.51h5.83v5.83h-5.83zM244.72 285.51h5.83v5.83h-5.83zM256.37 285.51h5.83v5.83h-5.83zM268.03 285.51h5.83v5.83h-5.83zM279.68 285.51h5.83v5.83h-5.83zM291.33 285.51h5.83v5.83h-5.83zM302.99 285.51h5.83v5.83h-5.83zM314.64 285.51h5.83v5.83h-5.83zM326.30 285.51h5.83v5.83h-5.83zM337.95 285.51h5.83v5.83h-5.83zM349.60 285.51h5.83v5.83h-5.83zM361.26 285.51h5.83v5.83h-5.83zM372.91 285.51h5.83v5.83h-5.83zM384.56 285.51h5.83v5.83h-5.83zM396.22 285.51h5.83v5.83h-5.83zM407.87 285.51h5.83v5.83h-5.83zM419.52 285.51h5.83v5.83h-5.83zM431.18 285.51h5.82v5.83h-5.82zM5.83 291.33h5.83v5.83h-5.83zM17.48 291.33h5.83v5.83h-5.83zM29.13 291.33h5.83v5.83h-5.83zM40.79 291.33h5.83v5.83h-5.83zM52.44 291.33h5.83v5.83h-5.83zM64.09 291.33h5.83v5.83h-5.83zM75.75 291.33h5.83v5.83h-5.83zM87.40 291.33h5.83v5.83h-5.83zM99.05 291.33h5.83v5.83h-5.83zM110.71 291.33h5.83v5.83h-5.83zM122.36 291.33h5.83v5.83h-5.83zM134.01 291.33h5.83v5.83h-5.83zM145.67 291.33h5.83v5.83h-5.83zM157.32 291.33h5.83v5.83h-5.83zM168.97 291.33h5.83v5.83h-5.83zM180.63 291.33h5.83v5.83h-5.83zM192.28 291.33h5.83v5.83h-5.83zM203.93 291.33h5.83v5.83h-5.83zM215.59 291.33h5.83v5.83h-5.83zM227.24 291.33h5.83v5.83h-5.83zM238.89 291.33h5.83v5.83h-5.83zM250.55 291.33h5.83v5.83h-5.83zM262.20 291.33h5.83v5.83h-5.83zM273.85 291.33h5.83v5.83h-5.83zM285.51 291.33h5.83v5.83h-5.83zM297.16 291.33h5.83v5.83h-5.83zM308.82 291.33h5.83v5.83h-5.83zM320.47 291.33h5.83v5.83h-5.83zM332.12 291.33h5.83v5.83h-5.83zM343.78 291.33h5.83v5.83h-5.83zM355.43 291.33h5.83v5.83h-5.83zM367.08 291.33h5.83v5.83h-5.83zM378.74 291.33h5.83v5.83h-5.83zM390.39 291.33h5.83v5.83h-5.83zM402.04 291.33h5.83v5.83h-5.83zM413.70 291.33h5.83v5.83h-5.83zM425.35 291.33h5.83v5.83h-5.83zM0.00 297.16h5.83v5.83h-5.83zM11.65 297.16h5.83v5.83h-5.83zM23.31 297.16h5.83v5.83h-5.83zM34.96 297.16h5.83v5.83h-5.83zM46.61 297.16h5.83v5.83h-5.83zM58.27 297.16h5.83v5.83h-5.83zM69.92 297.16h5.83v5.83h-5.83zM81.57 297.16h5.83v5.83h-5.83zM93.23 297.16h5.83v5.83h-5.83zM104.88 297.16h5.83v5.83h-5.83zM116.53 297.16h5.83v5.83h-5.83zM128.19 297.16h5.83v5.83h-5.83zM139.84 297.16h5.83v5.83h-5.83zM151.49 297.16h5.83v5.83h-5.83zM163.15 297.16h5.83v5.83h-5.83zM174.80 297.16h5.83v5.83h-5.83zM186.45 297.16h5.83v5.83h-5.83zM198.11 297.16h5.83v5.83h-5.83zM209.76 297.16h5.83v5.83h-5.83zM221.41 297.16h5.83v5.83h-5.83zM233.07 297.16h5.83v5.83h-5.83zM244.72 297.16h5.83v5.83h-5.83zM256.37 297.16h5.83v5.83h-5.83zM268.03 297.16h5.83v5.83h-5.83zM279.68 297.16h5.83v5.83h-5.83zM291.33 297.16h5.83v5.83h-5.83zM302.99 297.16h5.83v5.83h-5.83zM314.64 297.16h5.83v5.83h-5.83zM326.30 297.16h5.83v5.83h-5.83zM337.95 297.16h5.83v5.83h-5.83zM349.60 297.16h5.83v5.83h-5.83zM361.26 297.16h5.83v5.83h-5.83zM372.91 297.16h5.83v5.83h-5.83zM384.56 297.16h5.83v5.83h-5.83zM396.22 297.16h5.83v5.83h-5.83zM407.87 297.16h5.83v5.83h-5.83zM419.52 297.16h5.83v5.83h-5.83zM431.18 297.16h5.82v5.83h-5.82zM5.83 302.99h5.83v5.83h-5.83zM17.48 302.99h5.83v5.83h-5.83zM29.13 302.99h5.83v5.83h-5.83zM40.79 302.99h5.83v5.83h-5.83zM52.44 302.99h5.83v5.83h-5.83zM64.09 302.99h5.83v5.83h-5.83zM75.75 302.99h5.83v5.83h-5.83zM87.40 302.99h5.83v5.83h-5.83zM99.05 302.99h5.83v5.83h-5.83zM110.71 302.99h5.83v5.83h-5.83zM122.36 302.99h5.83v5.83h-5.83zM134.01 302.99h5.83v5.83h-5.83zM145.67 302.99h5.83v5.83h-5.83zM157.32 302.99h5.83v5.83h-5.83zM168.97 302.99h5.83v5.83h-5.83zM180.63 302.99h5.83v5.83h-5.83zM192.28 302.99h5.83v5.83h-5.83zM203.93 302.99h5.83v5.83h-5.83zM215.59 302.99h5.83v5.83h-5.83zM227.24 302.99h5.83v5.83h-5.83zM238.89 302.99h5.83v5.83h-5.83zM250.55 302.99h5.83v5.83h-5.83zM262.20 302.99h5.83v5.83h-5.83zM273.85 302.99h5.83v5.83h-5.83zM285.51 302.99h5.83v5.83h-5.83zM297.16 302.99h5.83v5.83h-5.83zM308.82 302.99h5.83v5.83h-5.83zM320.47 302.99h5.83v5.83h-5.83zM332.12 302.99h5.83v5.83h-5.83zM343.78 302.99h5.83v5.83h-5.83zM355.43 302.99h5.83v5.83h-5.83zM367.08 302.99h5.83v5.83h-5.83zM378.74 302.99h5.83v5.83h-5.83zM390.39 302.99h5.83v5.83h-5.83zM402.04 302.99h5.83v5.83h-5.83zM413.70 302.99h5.83v5.83h-5.83zM425.35 302.99h5.83v5.83h-5.83zM0.00 308.82h5.83v5.83h-5.83zM11.65 308.82h5.83v5.83h-5.83zM23.31 308.82h5.83v5.83h-5.83zM34.96 308.82h5.83v5.83h-5.83zM46.61 308.82h5.83v5.83h-5.83zM58.27 308.82h5.83v5.83h-5.83zM69.92 308.82h5.83v5.83h-5.83zM81.57 308.82h5.83v5.83h-5.83zM93.23 308.82h5.83v5.83h-5.83zM104.88 308.82h5.83v5.83h-5.83zM116.53 308.82h5.83v5.83h-5.83zM128.19 308.82h5.83v5.83h-5.83zM139.84 308.82h5.83v5.83h-5.83zM151.49 308.82h5.83v5.83h-5.83zM163.15 308.82h5.83v5.83h-5.83zM174.80 308.82h5.83v5.83h-5.83zM186.45 308.82h5.83v5.83h-5.83zM198.11 308.82h5.83v5.83h-5.83zM209.76 308.82h5.83v5.83h-5.83zM221.41 308.82h5.83v5.83h-5.83zM233.07 308.82h5.83v5.83h-5.83zM244.72 308.82h5.83v5.83h-5.83zM256.37 308.82h5.83v5.83h-5.83zM268.03 308.82h5.83v5.83h-5.83zM279.68 308.82h5.83v5.83h-5.83zM291.33 308.82h5.83v5.83h-5.83zM302.99 308.82h5.83v5.83h-5.83zM314.64 308.82h5.83v5.83h-5.83zM326.30 308.82h5.83v5.83h-5.83zM337.95 308.82h5.83v5.83h-5.83zM349.60 308.82h5.83v5.83h-5.83zM361.26 308.82h5.83v5.83h-5.83zM372.91 308.82h5.83v5.83h-5.83zM384.56 308.82h5.83v5.83h-5.83zM396.22 308.82h5.83v5.83h-5.83zM407.87 308.82h5.83v5.83h-5.83zM419.52 308.82h5.83v5.83h-5.83zM431.18 308.82h5.82v5.83h-5.82zM5.83 314.64h5.83v5.83h-5.83zM17.48 314.64h5.83v5.83h-5.83zM29.13 314.64h5.83v5.83h-5.83zM40.79 314.64h5.83v5.83h-5.83zM52.44 314.64h5.83v5.83h-5.83zM64.09 314.64h5.83v5.83h-5.83zM75.75 314.64h5.83v5.83h-5.83zM87.40 314.64h5.83v5.83h-5.83zM99.05 314.64h5.83v5.83h-5.83zM110.71 314.64h5.83v5.83h-5.83zM122.36 314.64h5.83v5.83h-5.83zM134.01 314.64h5.83v5.83h-5.83zM145.67 314.64h5.83v5.83h-5.83zM157.32 314.64h5.83v5.83h-5.83zM168.97 314.64h5.83v5.83h-5.83zM180.63 314.64h5.83v5.83h-5.83zM192.28 314.64h5.83v5.83h-5.83zM203.93 314.64h5.83v5.83h-5.83zM215.59 314.64h5.83v5.83h-5.83zM227.24 314.64h5.83v5.83h-5.83zM238.89 314.64h5.83v5.83h-5.83zM250.55 314.64h5.83v5.83h-5.83zM262.20 314.64h5.83v5.83h-5.83zM273.85 314.64h5.83v5.83h-5.83zM285.51 314.64h5.83v5.83h-5.83zM297.16 314.64h5.83v5.83h-5.83zM308.82 314.64h5.83v5.83h-5.83zM320.47 314.64h5.83v5.83h-5.83zM332.12 314.64h5.83v5.83h-5.83zM343.78 314.64h5.83v5.83h-5.83zM355.43 314.64h5.83v5.83h-5.83zM367.08 314.64h5.83v5.83h-5.83zM378.74 314.64h5.83v5.83h-5.83zM390.39 314.64h5.83v5.83h-5.83zM402.04 314.64h5.83v5.83h-5.83zM413.70 314.64h5.83v5.83h-5.83zM425.35 314.64h5.83v5.83h-5.83zM0.00 320.47h5.83v5.83h-5.83zM11.65 320.47h5.83v5.83h-5.83zM23.31 320.47h5.83v5.83h-5.83zM34.96 320.47h5.83v5.83h-5.83zM46.61 320.47h5.83v5.83h-5.83zM58.27 320.47h5.83v5.83h-5.83zM69.92 320.47h5.83v5.83h-5.83zM81.57 320.47h5.83v5.83h-5.83zM93.23 320.47h5.83v5.83h-5.83zM104.88 320.47h5.83v5.83h-5.83zM116.53 320.47h5.83v5.83h-5.83zM128.19 320.47h5.83v5.83h-5.83zM139.84 320.47h5.83v5.83h-5.83zM151.49 320.47h5.83v5.83h-5.83zM163.15 320.47h5.83v5.83h-5.83zM174.80 320.47h5.83v5.83h-5.83zM186.45 320.47h5.83v5.83h-5.83zM198.11 320.47h5.83v5.83h-5.83zM209.76 320.47h5.83v5.83h-5.83zM221.41 320.47h5.83v5.83h-5.83zM233.07 320.47h5.83v5.83h-5.83zM244.72 320.47h5.83v5.83h-5.83zM256.37 320.47h5.83v5.83h-5.83zM268.03 320.47h5.83v5.83h-5.83zM279.68 320.47h5.83v5.83h-5.83zM291.33 320.47h5.83v5.83h-5.83zM302.99 320.47h5.83v5.83h-5.83zM314.64 320.47h5.83v5.83h-5.83zM326.30 320.47h5.83v5.83h-5.83zM337.95 320.47h5.83v5.83h-5.83zM349.60 320.47h5.83v5.83h-5.83zM361.26 320.47h5.83v5.83h-5.83zM372.91 320.47h5.83v5.83h-5.83zM384.56 320.47h5.83v5.83h-5.83zM396.22 320.47h5.83v5.83h-5.83zM407.87 320.47h5.83v5.83h-5.83zM419.52 320.47h5.83v5.83h-5.83zM431.18 320.47h5.82v5.83h-5.82zM5.83 326.30h5.83v5.83h-5.83zM17.48 326.30h5.83v5.83h-5.83zM29.13 326.30h5.83v5.83h-5.83zM40.79 326.30h5.83v5.83h-5.83zM52.44 326.30h5.83v5.83h-5.83zM64.09 326.30h5.83v5.83h-5.83zM75.75 326.30h5.83v5.83h-5.83zM87.40 326.30h5.83v5.83h-5.83zM99.05 326.30h5.83v5.83h-5.83zM110.71 326.30h5.83v5.83h-5.83zM122.36 326.30h5.83v5.83h-5.83zM134.01 326.30h5.83v5.83h-5.83zM145.67 326.30h5.83v5.83h-5.83zM157.32 326.30h5.83v5.83h-5.83zM168.97 326.30h5.83v5.83h-5.83zM180.63 326.30h5.83v5.83h-5.83zM192.28 326.30h5.83v5.83h-5.83zM203.93 326.30h5.83v5.83h-5.83zM215.59 326.30h5.83v5.83h-5.83zM227.24 326.30h5.83v5.83h-5.83zM238.89 326.30h5.83v5.83h-5.83zM250.55 326.30h5.83v5.83h-5.83zM262.20 326.30h5.83v5.83h-5.83zM273.85 326.30h5.83v5.83h-5.83zM285.51 326.30h5.83v5.83h-5.83zM297.16 326.30h5.83v5.83h-5.83zM308.82 326.30h5.83v5.83h-5.83zM320.47 326.30h5.83v5.83h-5.83zM332.12 326.30h5.83v5.83h-5.83zM343.78 326.30h5.83v5.83h-5.83zM355.43 326.30h5.83v5.83h-5.83zM367.08 326.30h5.83v5.83h-5.83zM378.74 326.30h5.83v5.83h-5.83zM390.39 326.30h5.83v5.83h-5.83zM402.04 326.30h5.83v5.83h-5.83zM413.70 326.30h5.83v5.83h-5.83zM425.35 326.30h5.83v5.83h-5.83zM0.00 332.12h5.83v5.83h-5.83zM11.65 332.12h5.83v5.83h-5.83zM23.31 332.12h5.83v5.83h-5.83zM34.96 332.12h5.83v5.83h-5.83zM46.61 332.12h5.83v5.83h-5.83zM58.27 332.12h5.83v5.83h-5.83zM69.92 332.12h5.83v5.83h-5.83zM81.57 332.12h5.83v5.83h-5.83zM93.23 332.12h5.83v5.83h-5.83zM104.88 332.12h5.83v5.83h-5.83zM116.53 332.12h5.83v5.83h-5.83zM128.19 332.12h5.83v5.83h-5.83zM139.84 332.12h5.83v5.83h-5.83zM151.49 332.12h5.83v5.83h-5.83zM163.15 332.12h5.83v5.83h-5.83zM174.80 332.12h5.83v5.83h-5.83zM186.45 332.12h5.83v5.83h-5.83zM198.11 332.12h5.83v5.83h-5.83zM209.76 332.12h5.83v5.83h-5.83zM221.41 332.12h5.83v5.83h-5.83zM233.07 332.12h5.83v5.83h-5.83zM244.72 332.12h5.83v5.83h-5.83zM256.37 332.12h5.83v5.83h-5.83zM268.03 332.12h5.83v5.83h-5.83zM279.68 332.12h5.83v5.83h-5.83zM291.33 332.12h5.83v5.83h-5.83zM302.99 332.12h5.83v5.83h-5.83zM314.64 332.12h5.83v5.83h-5.83zM326.30 332.12h5.83v5.83h-5.83zM337.95 332.12h5.83v5.83h-5.83zM349.60 332.12h5.83v5.83h-5.83zM361.26 332.12h5.83v5.83h-5.83zM372.91 332.12h5.83v5.83h-5.83zM384.56 332.12h5.83v5.83h-5.83zM396.22 332.12h5.83v5.83h-5.83zM407.87 332.12h5.83v5.83h-5.83zM419.52 332.12h5.83v5.83h-5.83zM431.18 332.12h5.82v5.83h-5.82zM5.83 337.95h5.83v5.83h-5.83zM17.48 337.95h5.83v5.83h-5.83zM29.13 337.95h5.83v5.83h-5.83zM40.79 337.95h5.83v5.83h-5.83zM52.44 337.95h5.83v5.83h-5.83zM64.09 337.95h5.83v5.83h-5.83zM75.75 337.95h5.83v5.83h-5.83zM87.40 337.95h5.83v5.83h-5.83zM99.05 337.95h5.83v5.83h-5.83zM110.71 337.95h5.83v5.83h-5.83zM122.36 337.95h5.83v5.83h-5.83zM134.01 337.95h5.83v5.83h-5.83zM145.67 337.95h5.83v5.83h-5.83zM157.32 337.95h5.83v5.83h-5.83zM168.97 337.95h5.83v5.83h-5.83zM180.63 337.95h5.83v5.83h-5.83zM192.28 337.95h5.83v5.83h-5.83zM203.93 337.95h5.83v5.83h-5.83zM215.59 337.95h5.83v5.83h-5.83zM227.24 337.95h5.83v5.83h-5.83zM238.89 337.95h5.83v5.83h-5.83zM250.55 337.95h5.83v5.83h-5.83zM262.20 337.95h5.83v5.83h-5.83zM273.85 337.95h5.83v5.83h-5.83zM285.51 337.95h5.83v5.83h-5.83zM297.16 337.95h5.83v5.83h-5.83zM308.82 337.95h5.83v5.83h-5.83zM320.47 337.95h5.83v5.83h-5.83zM332.12 337.95h5.83v5.83h-5.83zM343.78 337.95h5.83v5.83h-5.83zM355.43 337.95h5.83v5.83h-5.83zM367.08 337.95h5.83v5.83h-5.83zM378.74 337.95h5.83v5.83h-5.83zM390.39 337.95h5.83v5.83h-5.83zM402.04 337.95h5.83v5.83h-5.83zM413.70 337.95h5.83v5.83h-5.83zM425.35 337.95h5.83v5.83h-5.83zM0.00 343.78h5.83v5.83h-5.83zM11.65 343.78h5.83v5.83h-5.83zM23.31 343.78h5.83v5.83h-5.83zM34.96 343.78h5.83v5.83h-5.83zM46.61 343.78h5.83v5.83h-5.83zM58.27 343.78h5.83v5.83h-5.83zM69.92 343.78h5.83v5.83h-5.83zM81.57 343.78h5.83v5.83h-5.83zM93.23 343.78h5.83v5.83h-5.83zM104.88 343.78h5.83v5.83h-5.83zM116.53 343.78h5.83v5.83h-5.83zM128.19 343.78h5.83v5.83h-5.83zM139.84 343.78h5.83v5.83h-5.83zM151.49 343.78h5.83v5.83h-5.83zM163.15 343.78h5.83v5.83h-5.83zM174.80 343.78h5.83v5.83h-5.83zM186.45 343.78h5.83v5.83h-5.83zM198.11 343.78h5.83v5.83h-5.83zM209.76 343.78h5.83v5.83h-5.83zM221.41 343.78h5.83v5.83h-5.83zM233.07 343.78h5.83v5.83h-5.83zM244.72 343.78h5.83v5.83h-5.83zM256.37 343.78h5.83v5.83h-5.83zM268.03 343.78h5.83v5.83h-5.83zM279.68 343.78h5.83v5.83h-5.83zM291.33 343.78h5.83v5.83h-5.83zM302.99 343.78h5.83v5.83h-5.83zM314.64 343.78h5.83v5.83h-5.83zM326.30 343.78h5.83v5.83h-5.83zM337.95 343.78h5.83v5.83h-5.83zM349.60 343.78h5.83v5.83h-5.83zM361.26 343.78h5.83v5.83h-5.83zM372.91 343.78h5.83v5.83h-5.83zM384.56 343.78h5.83v5.83h-5.83zM396.22 343.78h5.83v5.83h-5.83zM407.87 343.78h5.83v5.83h-5.83zM419.52 343.78h5.83v5.83h-5.83zM431.18 343.78h5.82v5.83h-5.82zM5.83 349.60h5.83v5.83h-5.83zM17.48 349.60h5.83v5.83h-5.83zM29.13 349.60h5.83v5.83h-5.83zM40.79 349.60h5.83v5.83h-5.83zM52.44 349.60h5.83v5.83h-5.83zM64.09 349.60h5.83v5.83h-5.83zM75.75 349.60h5.83v5.83h-5.83zM87.40 349.60h5.83v5.83h-5.83zM99.05 349.60h5.83v5.83h-5.83zM110.71 349.60h5.83v5.83h-5.83zM122.36 349.60h5.83v5.83h-5.83zM134.01 349.60h5.83v5.83h-5.83zM145.67 349.60h5.83v5.83h-5.83zM157.32 349.60h5.83v5.83h-5.83zM168.97 349.60h5.83v5.83h-5.83zM180.63 349.60h5.83v5.83h-5.83zM192.28 349.60h5.83v5.83h-5.83zM203.93 349.60h5.83v5.83h-5.83zM215.59 349.60h5.83v5.83h-5.83zM227.24 349.60h5.83v5.83h-5.83zM238.89 349.60h5.83v5.83h-5.83zM250.55 349.60h5.83v5.83h-5.83zM262.20 349.60h5.83v5.83h-5.83zM273.85 349.60h5.83v5.83h-5.83zM285.51 349.60h5.83v5.83h-5.83zM297.16 349.60h5.83v5.83h-5.83zM308.82 349.60h5.83v5.83h-5.83zM320.47 349.60h5.83v5.83h-5.83zM332.12 349.60h5.83v5.83h-5.83zM343.78 349.60h5.83v5.83h-5.83zM355.43 349.60h5.83v5.83h-5.83zM367.08 349.60h5.83v5.83h-5.83zM378.74 349.60h5.83v5.83h-5.83zM390.39 349.60h5.83v5.83h-5.83zM402.04 349.60h5.83v5.83h-5.83zM413.70 349.60h5.83v5.83h-5.83zM425.35 349.60h5.83v5.83h-5.83zM0.00 355.43h5.83v5.83h-5.83zM11.65 355.43h5.83v5.83h-5.83zM23.31 355.43h5.83v5.83h-5.83zM34.96 355.43h5.83v5.83h-5.83zM46.61 355.43h5.83v5.83h-5.83zM58.27 355.43h5.83v5.83h-5.83zM69.92 355.43h5.83v5.83h-5.83zM81.57 355.43h5.83v5.83h-5.83zM93.23 355.43h5.83v5.83h-5.83zM104.88 355.43h5.83v5.83h-5.83zM116.53 355.43h5.83v5.83h-5.83zM128.19 355.43h5.83v5.83h-5.83zM139.84 355.43h5.83v5.83h-5.83zM151.49 355.43h5.83v5.83h-5.83zM163.15 355.43h5.83v5.83h-5.83zM174.80 355.43h5.83v5.83h-5.83zM186.45 355.43h5.83v5.83h-5.83zM198.11 355.43h5.83v5.83h-5.83zM209.76 355.43h5.83v5.83h-5.83zM221.41 355.43h5.83v5.83h-5.83zM233.07 355.43h5.83v5.83h-5.83zM244.72 355.43h5.83v5.83h-5.83zM256.37 355.43h5.83v5.83h-5.83zM268.03 355.43h5.83v5.83h-5.83zM279.68 355.43h5.83v5.83h-5.83zM291.33 355.43h5.83v5.83h-5.83zM302.99 355.43h5.83v5.83h-5.83zM314.64 355.43h5.83v5.83h-5.83zM326.30 355.43h5.83v5.83h-5.83zM337.95 355.43h5.83v5.83h-5.83zM349.60 355.43h5.83v5.83h-5.83zM361.26 355.43h5.83v5.83h-5.83zM372.91 355.43h5.83v5.83h-5.83zM384.56 355.43h5.83v5.83h-5.83zM396.22 355.43h5.83v5.83h-5.83zM407.87 355.43h5.83v5.83h-5.83zM419.52 355.43h5.83v5.83h-5.83zM431.18 355.43h5.82v5.83h-5.82zM5.83 361.26h5.83v5.83h-5.83zM17.48 361.26h5.83v5.83h-5.83zM29.13 361.26h5.83v5.83h-5.83zM40.79 361.26h5.83v5.83h-5.83zM52.44 361.26h5.83v5.83h-5.83zM64.09 361.26h5.83v5.83h-5.83zM75.75 361.26h5.83v5.83h-5.83zM87.40 361.26h5.83v5.83h-5.83zM99.05 361.26h5.83v5.83h-5.83zM110.71 361.26h5.83v5.83h-5.83zM122.36 361.26h5.83v5.83h-5.83zM134.01 361.26h5.83v5.83h-5.83zM145.67 361.26h5.83v5.83h-5.83zM157.32 361.26h5.83v5.83h-5.83zM168.97 361.26h5.83v5.83h-5.83zM180.63 361.26h5.83v5.83h-5.83zM192.28 361.26h5.83v5.83h-5.83zM203.93 361.26h5.83v5.83h-5.83zM215.59 361.26h5.83v5.83h-5.83zM227.24 361.26h5.83v5.83h-5.83zM238.89 361.26h5.83v5.83h-5.83zM250.55 361.26h5.83v5.83h-5.83zM262.20 361.26h5.83v5.83h-5.83zM273.85 361.26h5.83v5.83h-5.83zM285.51 361.26h5.83v5.83h-5.83zM297.16 361.26h5.83v5.83h-5.83zM308.82 361.26h5.83v5.83h-5.83zM320.47 361.26h5.83v5.83h-5.83zM332.12 361.26h5.83v5.83h-5.83zM343.78 361.26h5.83v5.83h-5.83zM355.43 361.26h5.83v5.83h-5.83zM367.08 361.26h5.83v5.83h-5.83zM378.74 361.26h5.83v5.83h-5.83zM390.39 361.26h5.83v5.83h-5.83zM402.04 361.26h5.83v5.83h-5.83zM413.70 361.26h5.83v5.83h-5.83zM425.35 361.26h5.83v5.83h-5.83zM0.00 367.08h5.83v5.83h-5.83zM11.65 367.08h5.83v5.83h-5.83zM23.31 367.08h5.83v5.83h-5.83zM34.96 367.08h5.83v5.83h-5.83zM46.61 367.08h5.83v5.83h-5.83zM58.27 367.08h5.83v5.83h-5.83zM69.92 367.08h5.83v5.83h-5.83zM81.57 367.08h5.83v5.83h-5.83zM93.23 367.08h5.83v5.83h-5.83zM104.88 367.08h5.83v5.83h-5.83zM116.53 367.08h5.83v5.83h-5.83zM128.19 367.08h5.83v5.83h-5.83zM139.84 367.08h5.83v5.83h-5.83zM151.49 367.08h5.83v5.83h-5.83zM163.15 367.08h5.83v5.83h-5.83zM174.80 367.08h5.83v5.83h-5.83zM186.45 367.08h5.83v5.83h-5.83zM198.11 367.08h5.83v5.83h-5.83zM209.76 367.08h5.83v5.83h-5.83zM221.41 367.08h5.83v5.83h-5.83zM233.07 367.08h5.83v5.83h-5.83zM244.72 367.08h5.83v5.83h-5.83zM256.37 367.08h5.83v5.83h-5.83zM268.03 367.08h5.83v5.83h-5.83zM279.68 367.08h5.83v5.83h-5.83zM291.33 367.08h5.83v5.83h-5.83zM302.99 367.08h5.83v5.83h-5.83zM314.64 367.08h5.83v5.83h-5.83zM326.30 367.08h5.83v5.83h-5.83zM337.95 367.08h5.83v5.83h-5.83zM349.60 367.08h5.83v5.83h-5.83zM361.26 367.08h5.83v5.83h-5.83zM372.91 367.08h5.83v5.83h-5.83zM384.56 367.08h5.83v5.83h-5.83zM396.22 367.08h5.83v5.83h-5.83zM407.87 367.08h5.83v5.83h-5.83zM419.52 367.08h5.83v5.83h-5.83zM431.18 367.08h5.82v5.83h-5.82zM5.83 372.91h5.83v5.83h-5.83zM17.48 372.91h5.83v5.83h-5.83zM29.13 372.91h5.83v5.83h-5.83zM40.79 372.91h5.83v5.83h-5.83zM52.44 372.91h5.83v5.83h-5.83zM64.09 372.91h5.83v5.83h-5.83zM75.75 372.91h5.83v5.83h-5.83zM87.40 372.91h5.83v5.83h-5.83zM99.05 372.91h5.83v5.83h-5.83zM110.71 372.91h5.83v5.83h-5.83zM122.36 372.91h5.83v5.83h-5.83zM134.01 372.91h5.83v5.83h-5.83zM145.67 372.91h5.83v5.83h-5.83zM157.32 372.91h5.83v5.83h-5.83zM168.97 372.91h5.83v5.83h-5.83zM180.63 372.91h5.83v5.83h-5.83zM192.28 372.91h5.83v5.83h-5.83zM203.93 372.91h5.83v5.83h-5.83zM215.59 372.91h5.83v5.83h-5.83zM227.24 372.91h5.83v5.83h-5.83zM238.89 372.91h5.83v5.83h-5.83zM250.55 372.91h5.83v5.83h-5.83zM262.20 372.91h5.83v5.83h-5.83zM273.85 372.91h5.83v5.83h-5.83zM285.51 372.91h5.83v5.83h-5.83zM297.16 372.91h5.83v5.83h-5.83zM308.82 372.91h5.83v5.83h-5.83zM320.47 372.91h5.83v5.83h-5.83zM332.12 372.91h5.83v5.83h-5.83zM343.78 372.91h5.83v5.83h-5.83zM355.43 372.91h5.83v5.83h-5.83zM367.08 372.91h5.83v5.83h-5.83zM378.74 372.91h5.83v5.83h-5.83zM390.39 372.91h5.83v5.83h-5.83zM402.04 372.91h5.83v5.83h-5.83zM413.70 372.91h5.83v5.83h-5.83zM425.35 372.91h5.83v5.83h-5.83z"/>
</svg>

<!-- HELLO -->
<svg class="abs" style="left:0;top:0" width="728" height="486" viewBox="0 0 728 486">
<g fill="#000">
<!-- H -->
<path d="M227.8 300.6 L241.4 300.6 Q239.3 309 239.3 327.2 L264.4 327.2 Q264.4 309 262.3 300.6 L276.4 300.6 Q274.5 310 274.5 331 Q274.5 353 276.9 362.5 L262 362.5 Q264.4 353 264.4 334.5 L239.3 334.5 Q239.3 353 241.8 362.5 L226.5 362.5 Q230 353 230 331 Q230 310 227.8 300.6 Z"/>
<!-- E -->
<path d="M287.6 300.5 L320.5 300.5 L317.4 309.8 Q314 307.4 308 306.9 L300 306.4 L299.8 327.2 L317.1 327.2 L312.7 335 Q309 333 305 333 L299.8 333 Q299.8 350 300.4 355.7 Q313 355.5 323.6 351.3 L319.4 362.5 L287.3 362.5 Q289.7 352 289.7 331 Q289.7 310 287.6 300.5 Z"/>
<!-- L1 -->
<path d="M330.8 300.5 L344.8 300.5 Q342.7 310 342.7 331 Q342.7 349 343.4 355.5 Q353 355.5 362.1 351.8 L358.2 362.5 L329.8 362.5 Q333 352 333 331 Q333 310 330.8 300.5 Z"/>
<!-- L2 -->
<path d="M368.9 300.5 L383 300.5 Q380.9 310 380.9 331 Q380.9 349 381.6 355.5 Q391.5 355.5 401 352.2 L397.2 362.5 L368.1 362.5 Q371.1 352 371.1 331 Q371.1 310 368.9 300.5 Z"/>
<!-- O -->
<path fill-rule="evenodd" d="M436 300.2 A31.1 31.3 0 1 0 436 362.8 A31.1 31.3 0 1 0 436 300.2 Z M436.3 332.3 m-7.8 -24 a20 25.2 -18 1 0 15.6 48 a20 25.2 -18 1 0 -15.6 -48 Z"/>
</g>
</svg>

<!-- layers panel -->

<div class="abs" style="left:667px;top:204.5px;width:82px;height:310px;background:#383838;box-shadow:0 0 2.5px 0.5px rgba(0,0,0,0.55)"></div>
<div class="abs" style="left:668px;top:205.5px;width:61px;height:290px;background:#4a4a4a"></div>
<div class="abs" style="left:668px;top:205.5px;width:61px;height:75px;background:#515151"></div>
<div class="abs" style="left:699.5px;top:205.5px;width:30px;height:12.5px;background:#2e2e2e"></div>
<span class="t" id="ly" style="transform-origin:0 0;transform:scaleX(0.8268);left:672.9px;top:207px;font-size:7.8px;line-height:12px;color:#f2f2f2;font-weight:bold">Layers</span>
<div class="abs" style="left:671px;top:221.5px;width:50.5px;height:14px;border:1px solid #333;border-radius:2.5px;background:linear-gradient(#6a6a6a,#5a5a5a)"></div>
<svg class="abs" style="left:675px;top:224.3px" width="8.4" height="9.2" viewBox="0 0 10 11"><circle cx="5.6" cy="4.4" r="2.6" fill="none" stroke="#e4e4e4" stroke-width="1.1"/><path d="M3.8 6.3L1.2 9" stroke="#e4e4e4" stroke-width="1.4" fill="none"/></svg>
<span class="t" id="kind" style="transform-origin:0 0;transform:scaleX(0.8926);left:687.0px;top:222.8px;font-size:7.9px;line-height:12px;color:#f0f0f0">Kind</span>
<svg class="abs" style="left:713.6px;top:225.2px" width="5" height="7" viewBox="0 0 5 7"><path d="M0.2 2.7L2.5 0.2L4.8 2.7z M0.2 4.3L2.5 6.8L4.8 4.3z" fill="#eee"/></svg>
<div class="abs" style="left:668px;top:239px;width:61px;height:1px;background:#3f3f3f"></div>
<div class="abs" style="left:668px;top:240px;width:61px;height:1px;background:#5c5c5c"></div>
<div class="abs" style="left:671px;top:242.5px;width:62px;height:13px;border:1px solid #646464;border-radius:2px;background:#5c5c5c"></div>
<span class="t" id="normal" style="transform-origin:0 0;transform:scaleX(0.9230);left:676.9px;top:243.2px;font-size:7.6px;line-height:12px;color:#b2b2b2">Normal</span>
<div class="abs" style="left:668px;top:258px;width:61px;height:1px;background:#3f3f3f"></div>
<div class="abs" style="left:668px;top:259px;width:61px;height:1px;background:#5c5c5c"></div>
<span class="t" id="lock" style="transform-origin:0 0;transform:scaleX(0.9281);left:672.0px;top:264px;font-size:7.8px;line-height:12px;color:#e4e4e4">Lock:</span>
<svg class="abs" style="left:696px;top:265px" width="9" height="10" viewBox="0 0 9 10"><rect x="0.5" y="0.5" width="8" height="8.4" fill="#6a6a6a" stroke="#9a9a9a"/><rect x="1" y="1" width="3.5" height="3.7" fill="#8e8e8e"/><rect x="4.5" y="4.7" width="3.5" height="3.7" fill="#8e8e8e"/></svg>
<svg class="abs" style="left:710px;top:263px" width="14" height="12" viewBox="0 0 14 12"><path d="M12.6 0.8L6.2 7.2" stroke="#b0b0b0" stroke-width="2" fill="none"/><path d="M6.2 6L8.4 8.2Q5.5 11.4 0.6 10.8Q3.6 9.6 4.2 6.8Z" fill="#b0b0b0"/></svg>
<div class="abs" style="left:727px;top:265px;width:2px;height:9px;background:#7a7a7a"></div>
<div class="abs" style="left:668px;top:280px;width:61px;height:1px;background:#3c3c3c"></div>
<div class="abs" style="left:668px;top:281px;width:61px;height:57px;background:#505050"></div>
<div class="abs" style="left:668px;top:308.3px;width:61px;height:1px;background:#3c3c3c"></div>
<div class="abs" style="left:668px;top:338px;width:61px;height:1px;background:#464646"></div>
<div class="abs" style="left:689.3px;top:281px;width:1px;height:57px;background:#3e3e3e"></div>
<svg class="abs" style="left:673.6px;top:290.5px" width="10.6" height="8" viewBox="0 0 12 9"><path d="M0.6 4.5Q5.8 -1.6 11.2 4.5Q5.8 10.4 0.6 4.5Z" fill="#ededed"/><circle cx="5.9" cy="4.4" r="2.2" fill="#444"/><circle cx="5.9" cy="4.4" r="0.9" fill="#ddd"/></svg>
<span class="t" id="tt" style="left:698.3px;top:286.6px;font-family:'Liberation Serif',serif;font-size:16.5px;-webkit-text-stroke:0.2px #eaeaea;line-height:16px;color:#eaeaea">T</span>
<span class="t" id="lh" style="left:722.9px;top:288.5px;font-size:8.6px;line-height:12px;color:#f0f0f0;font-weight:bold">H</span>
<div class="abs" style="left:674.2px;top:318.8px;width:8.6px;height:8.6px;border:1px solid #3e3e3e;background:#5e5e5e"></div>
<div class="abs" style="left:692.2px;top:311.2px;width:24px;height:23.6px;border:1px solid #0c0c0c;background:#fff"></div>
<span class="t" id="la" style="left:722.9px;top:317px;font-size:8.6px;line-height:12px;color:#f0f0f0;font-weight:bold">La</span>


</div></div></body></html>
